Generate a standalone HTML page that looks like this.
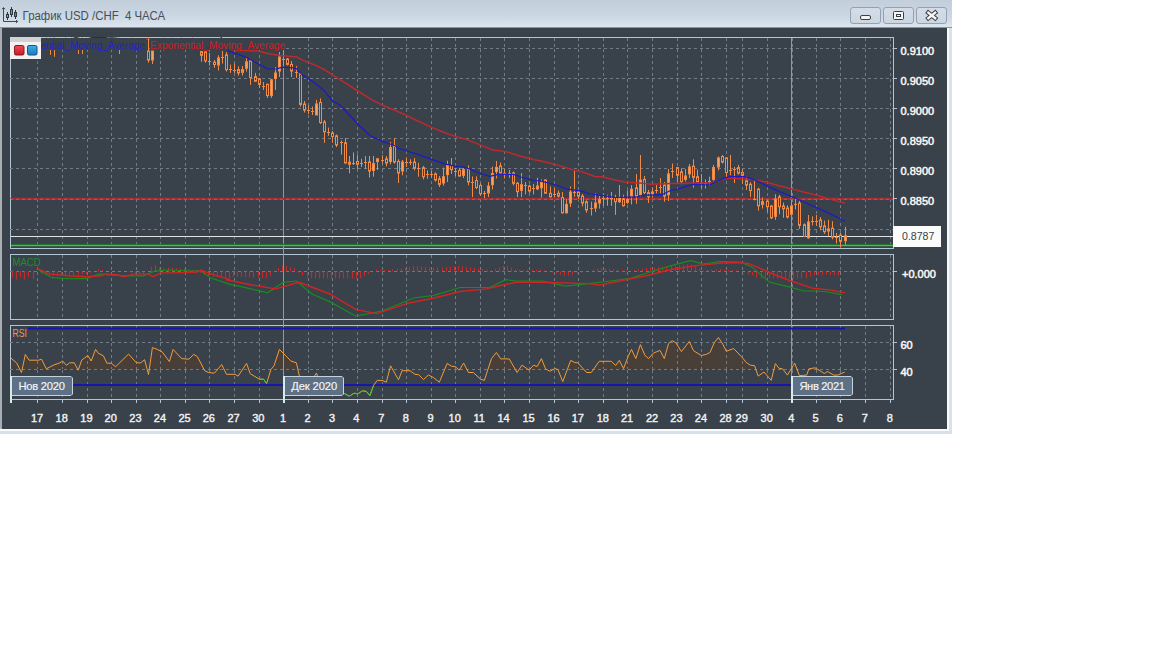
<!DOCTYPE html><html><head><meta charset="utf-8"><style>html,body{margin:0;padding:0;width:1152px;height:648px;background:#fff;overflow:hidden}svg{display:block}</style></head><body>
<svg width="1152" height="648" viewBox="0 0 1152 648" style="font-family:'Liberation Sans', sans-serif">
<defs><linearGradient id="tb" x1="0" y1="0" x2="0" y2="1"><stop offset="0" stop-color="#c2cfdb"/><stop offset="0.5" stop-color="#c9d5e1"/><stop offset="1" stop-color="#dde6ef"/></linearGradient><linearGradient id="btn" x1="0" y1="0" x2="0" y2="1"><stop offset="0" stop-color="#d4dde7"/><stop offset="1" stop-color="#cbd6e1"/></linearGradient><linearGradient id="rg" x1="0" y1="0" x2="0" y2="1"><stop offset="0" stop-color="#f04a55"/><stop offset="1" stop-color="#c01c28"/></linearGradient><linearGradient id="bg2" x1="0" y1="0" x2="0" y2="1"><stop offset="0" stop-color="#3cb0ea"/><stop offset="1" stop-color="#1c78bc"/></linearGradient><clipPath id="c1"><rect x="11" y="37" width="882" height="211"/></clipPath><clipPath id="c2"><rect x="11" y="255" width="882" height="64"/></clipPath><clipPath id="c3"><rect x="11" y="326" width="882" height="73"/></clipPath><clipPath id="c3f"><rect x="11" y="326" width="882" height="43.5"/></clipPath></defs>
<rect x="0" y="0" width="952" height="28" fill="url(#tb)"/>
<rect x="0" y="27" width="952" height="1" fill="#8d949b"/>
<rect x="0" y="28" width="952" height="406" fill="#d8e2ec"/>
<rect x="0" y="28" width="949" height="403" fill="#f8fafc"/>
<rect x="0" y="28" width="2" height="401" fill="#a9aeb3"/>
<rect x="2" y="28" width="945" height="401" fill="#39414b"/>
<g stroke="#3e4a56" stroke-width="1" fill="none"><path d="M3.5 8 V21.5 H17.5"/><path d="M2 9.2 L3.5 7.5 L5 9.2"/><path d="M16 20 L17.7 21.5 L16 23"/></g>
<g stroke="#2e3a40" stroke-width="1"><line x1="7.5" y1="12" x2="7.5" y2="20"/><rect x="6.5" y="14.5" width="2" height="3" fill="#80b880"/><line x1="11.5" y1="7" x2="11.5" y2="17"/><rect x="10.5" y="9.5" width="2" height="5" fill="#6aa86a"/><line x1="15.5" y1="10" x2="15.5" y2="19"/><rect x="14.5" y="12.5" width="2" height="4" fill="#9a6868"/></g>
<text x="22.6" y="19.8" font-size="12" fill="#44505c" textLength="142.5" lengthAdjust="spacingAndGlyphs" style="white-space:pre">График USD /CHF  4 ЧАСА</text>
<rect x="850.5" y="7.5" width="30" height="16" rx="2.5" fill="url(#btn)" stroke="#93a1b0"/>
<rect x="883.5" y="7.5" width="30" height="16" rx="2.5" fill="url(#btn)" stroke="#93a1b0"/>
<rect x="916.5" y="7.5" width="30" height="16" rx="2.5" fill="url(#btn)" stroke="#93a1b0"/>
<rect x="860.5" y="15.5" width="10" height="4" rx="1.5" fill="#f4f4f4" stroke="#3a3f46"/>
<rect x="893.5" y="11.5" width="10" height="8" rx="1" fill="#f4f4f4" stroke="#3a3f46"/><rect x="896.5" y="14.5" width="4" height="2" fill="none" stroke="#3a3f46"/>
<path d="M928.3 12.6 L935.2 18.2 M935.2 12.6 L928.3 18.2" stroke="#3a3f46" stroke-width="4.4" stroke-linecap="square"/><path d="M928.3 12.6 L935.2 18.2 M935.2 12.6 L928.3 18.2" stroke="#f6f6f6" stroke-width="2.4" stroke-linecap="square"/>
<rect x="10.5" y="37.5" width="883.0" height="211.0" fill="none" stroke="#b4c4d2"/>
<rect x="10.5" y="254.5" width="883.0" height="65.0" fill="none" stroke="#b4c4d2"/>
<rect x="10.5" y="325.5" width="883.0" height="74.0" fill="none" stroke="#b4c4d2"/>
<g clip-path="url(#c3f)"><polygon points="10.0,369.5 10.0,357.3 16.7,363.0 21.5,372.6 25.3,354.5 29.1,360.2 38.6,360.2 41.5,359.2 46.3,368.8 53.9,365.0 60.0,362.8 62.6,361.0 66.5,365.4 69.5,362.8 74.3,362.8 78.2,370.2 81.7,360.2 87.8,355.4 91.2,361.0 95.6,349.3 98.2,353.2 103.4,355.8 106.9,363.2 111.2,363.2 115.6,366.7 128.6,354.1 136.4,362.8 140.7,362.8 144.6,359.7 148.5,374.5 152.4,347.6 157.3,349.4 162.2,351.9 169.4,361.6 173.1,349.4 181.6,358.6 188.9,359.2 193.7,354.3 197.4,356.7 204.7,370.7 208.3,372.5 214.4,373.1 221.7,364.6 226.5,374.3 235.0,374.3 238.1,376.2 246.6,363.4 250.2,373.7 259.4,379.2 263.6,379.2 266.6,383.5 270.9,369.5 274.0,365.8 279.4,349.4 283.7,353.7 290.9,361.0 296.4,362.8 299.4,376.2 305.0,385.0 312.0,380.0 316.5,373.0 320.0,385.0 330.0,392.0 343.8,393.2 349.3,396.2 354.1,393.2 357.8,393.8 362.6,390.8 366.3,391.4 369.9,395.6 373.6,385.3 377.2,380.4 382.1,380.4 386.3,382.2 390.6,365.8 398.5,379.8 402.1,370.7 410.0,370.7 414.9,374.3 418.6,374.7 423.5,379.6 428.4,375.0 433.2,377.4 439.3,382.2 447.2,363.4 451.5,366.2 455.1,366.5 459.3,370.1 463.6,363.0 468.5,372.5 473.3,372.5 480.6,379.2 484.3,380.4 491.5,358.6 496.4,352.5 500.7,358.9 509.2,358.9 517.1,372.5 521.9,365.2 529.2,370.1 533.5,365.2 537.1,366.5 541.4,358.6 545.6,368.9 549.9,371.3 554.9,368.6 557.9,369.5 562.8,381.6 570.7,360.4 574.9,362.6 577.9,362.8 586.5,372.5 591.3,372.5 599.2,361.3 611.4,361.3 615.6,365.5 619.3,360.4 623.5,368.6 628.5,355.5 631.5,349.4 635.8,358.6 640.4,344.6 645.0,355.5 648.6,358.6 653.4,353.1 660.0,350.4 664.3,358.6 668.6,343.4 672.2,340.7 675.9,342.8 681.4,351.6 689.3,341.5 693.5,350.7 701.4,355.5 706.3,354.3 710.0,352.5 714.2,342.8 718.4,337.5 722.7,344.0 726.3,351.3 733.6,348.5 741.5,356.7 746.4,362.6 750.4,365.2 754.6,365.7 758.2,376.1 764.0,372.0 771.2,380.3 775.4,363.6 779.0,368.3 782.7,368.9 787.4,375.1 794.7,363.1 799.4,375.6 806.7,375.1 808.8,368.9 815.0,367.8 824.4,373.5 827.5,371.5 833.8,375.1 837.9,375.1 844.7,372.0 844.7,369.5" fill="#483f38"/></g>
<g stroke="#737c85" stroke-width="1" stroke-dasharray="3,3"><line x1="10" y1="48.5" x2="893" y2="48.5"/><line x1="10" y1="78.5" x2="893" y2="78.5"/><line x1="10" y1="108.5" x2="893" y2="108.5"/><line x1="10" y1="138.5" x2="893" y2="138.5"/><line x1="10" y1="168.5" x2="893" y2="168.5"/><line x1="10" y1="198.5" x2="893" y2="198.5"/><line x1="10" y1="229.5" x2="893" y2="229.5"/><line x1="37.5" y1="38" x2="37.5" y2="48"/><line x1="37.5" y1="49" x2="37.5" y2="78"/><line x1="37.5" y1="79" x2="37.5" y2="108"/><line x1="37.5" y1="109" x2="37.5" y2="138"/><line x1="37.5" y1="139" x2="37.5" y2="168"/><line x1="37.5" y1="169" x2="37.5" y2="198"/><line x1="37.5" y1="199" x2="37.5" y2="229"/><line x1="37.5" y1="230" x2="37.5" y2="248"/><line x1="37.5" y1="255" x2="37.5" y2="271"/><line x1="37.5" y1="272" x2="37.5" y2="319"/><line x1="37.5" y1="326" x2="37.5" y2="342"/><line x1="37.5" y1="343" x2="37.5" y2="369"/><line x1="37.5" y1="370" x2="37.5" y2="399"/><line x1="62.5" y1="38" x2="62.5" y2="48"/><line x1="62.5" y1="49" x2="62.5" y2="78"/><line x1="62.5" y1="79" x2="62.5" y2="108"/><line x1="62.5" y1="109" x2="62.5" y2="138"/><line x1="62.5" y1="139" x2="62.5" y2="168"/><line x1="62.5" y1="169" x2="62.5" y2="198"/><line x1="62.5" y1="199" x2="62.5" y2="229"/><line x1="62.5" y1="230" x2="62.5" y2="248"/><line x1="62.5" y1="255" x2="62.5" y2="271"/><line x1="62.5" y1="272" x2="62.5" y2="319"/><line x1="62.5" y1="326" x2="62.5" y2="342"/><line x1="62.5" y1="343" x2="62.5" y2="369"/><line x1="62.5" y1="370" x2="62.5" y2="399"/><line x1="87.5" y1="38" x2="87.5" y2="48"/><line x1="87.5" y1="49" x2="87.5" y2="78"/><line x1="87.5" y1="79" x2="87.5" y2="108"/><line x1="87.5" y1="109" x2="87.5" y2="138"/><line x1="87.5" y1="139" x2="87.5" y2="168"/><line x1="87.5" y1="169" x2="87.5" y2="198"/><line x1="87.5" y1="199" x2="87.5" y2="229"/><line x1="87.5" y1="230" x2="87.5" y2="248"/><line x1="87.5" y1="255" x2="87.5" y2="271"/><line x1="87.5" y1="272" x2="87.5" y2="319"/><line x1="87.5" y1="326" x2="87.5" y2="342"/><line x1="87.5" y1="343" x2="87.5" y2="369"/><line x1="87.5" y1="370" x2="87.5" y2="399"/><line x1="111.5" y1="38" x2="111.5" y2="48"/><line x1="111.5" y1="49" x2="111.5" y2="78"/><line x1="111.5" y1="79" x2="111.5" y2="108"/><line x1="111.5" y1="109" x2="111.5" y2="138"/><line x1="111.5" y1="139" x2="111.5" y2="168"/><line x1="111.5" y1="169" x2="111.5" y2="198"/><line x1="111.5" y1="199" x2="111.5" y2="229"/><line x1="111.5" y1="230" x2="111.5" y2="248"/><line x1="111.5" y1="255" x2="111.5" y2="271"/><line x1="111.5" y1="272" x2="111.5" y2="319"/><line x1="111.5" y1="326" x2="111.5" y2="342"/><line x1="111.5" y1="343" x2="111.5" y2="369"/><line x1="111.5" y1="370" x2="111.5" y2="399"/><line x1="136.5" y1="38" x2="136.5" y2="48"/><line x1="136.5" y1="49" x2="136.5" y2="78"/><line x1="136.5" y1="79" x2="136.5" y2="108"/><line x1="136.5" y1="109" x2="136.5" y2="138"/><line x1="136.5" y1="139" x2="136.5" y2="168"/><line x1="136.5" y1="169" x2="136.5" y2="198"/><line x1="136.5" y1="199" x2="136.5" y2="229"/><line x1="136.5" y1="230" x2="136.5" y2="248"/><line x1="136.5" y1="255" x2="136.5" y2="271"/><line x1="136.5" y1="272" x2="136.5" y2="319"/><line x1="136.5" y1="326" x2="136.5" y2="342"/><line x1="136.5" y1="343" x2="136.5" y2="369"/><line x1="136.5" y1="370" x2="136.5" y2="399"/><line x1="160.5" y1="38" x2="160.5" y2="48"/><line x1="160.5" y1="49" x2="160.5" y2="78"/><line x1="160.5" y1="79" x2="160.5" y2="108"/><line x1="160.5" y1="109" x2="160.5" y2="138"/><line x1="160.5" y1="139" x2="160.5" y2="168"/><line x1="160.5" y1="169" x2="160.5" y2="198"/><line x1="160.5" y1="199" x2="160.5" y2="229"/><line x1="160.5" y1="230" x2="160.5" y2="248"/><line x1="160.5" y1="255" x2="160.5" y2="271"/><line x1="160.5" y1="272" x2="160.5" y2="319"/><line x1="160.5" y1="326" x2="160.5" y2="342"/><line x1="160.5" y1="343" x2="160.5" y2="369"/><line x1="160.5" y1="370" x2="160.5" y2="399"/><line x1="185.5" y1="38" x2="185.5" y2="48"/><line x1="185.5" y1="49" x2="185.5" y2="78"/><line x1="185.5" y1="79" x2="185.5" y2="108"/><line x1="185.5" y1="109" x2="185.5" y2="138"/><line x1="185.5" y1="139" x2="185.5" y2="168"/><line x1="185.5" y1="169" x2="185.5" y2="198"/><line x1="185.5" y1="199" x2="185.5" y2="229"/><line x1="185.5" y1="230" x2="185.5" y2="248"/><line x1="185.5" y1="255" x2="185.5" y2="271"/><line x1="185.5" y1="272" x2="185.5" y2="319"/><line x1="185.5" y1="326" x2="185.5" y2="342"/><line x1="185.5" y1="343" x2="185.5" y2="369"/><line x1="185.5" y1="370" x2="185.5" y2="399"/><line x1="209.5" y1="38" x2="209.5" y2="48"/><line x1="209.5" y1="49" x2="209.5" y2="78"/><line x1="209.5" y1="79" x2="209.5" y2="108"/><line x1="209.5" y1="109" x2="209.5" y2="138"/><line x1="209.5" y1="139" x2="209.5" y2="168"/><line x1="209.5" y1="169" x2="209.5" y2="198"/><line x1="209.5" y1="199" x2="209.5" y2="229"/><line x1="209.5" y1="230" x2="209.5" y2="248"/><line x1="209.5" y1="255" x2="209.5" y2="271"/><line x1="209.5" y1="272" x2="209.5" y2="319"/><line x1="209.5" y1="326" x2="209.5" y2="342"/><line x1="209.5" y1="343" x2="209.5" y2="369"/><line x1="209.5" y1="370" x2="209.5" y2="399"/><line x1="234.5" y1="38" x2="234.5" y2="48"/><line x1="234.5" y1="49" x2="234.5" y2="78"/><line x1="234.5" y1="79" x2="234.5" y2="108"/><line x1="234.5" y1="109" x2="234.5" y2="138"/><line x1="234.5" y1="139" x2="234.5" y2="168"/><line x1="234.5" y1="169" x2="234.5" y2="198"/><line x1="234.5" y1="199" x2="234.5" y2="229"/><line x1="234.5" y1="230" x2="234.5" y2="248"/><line x1="234.5" y1="255" x2="234.5" y2="271"/><line x1="234.5" y1="272" x2="234.5" y2="319"/><line x1="234.5" y1="326" x2="234.5" y2="342"/><line x1="234.5" y1="343" x2="234.5" y2="369"/><line x1="234.5" y1="370" x2="234.5" y2="399"/><line x1="259.5" y1="38" x2="259.5" y2="48"/><line x1="259.5" y1="49" x2="259.5" y2="78"/><line x1="259.5" y1="79" x2="259.5" y2="108"/><line x1="259.5" y1="109" x2="259.5" y2="138"/><line x1="259.5" y1="139" x2="259.5" y2="168"/><line x1="259.5" y1="169" x2="259.5" y2="198"/><line x1="259.5" y1="199" x2="259.5" y2="229"/><line x1="259.5" y1="230" x2="259.5" y2="248"/><line x1="259.5" y1="255" x2="259.5" y2="271"/><line x1="259.5" y1="272" x2="259.5" y2="319"/><line x1="259.5" y1="326" x2="259.5" y2="342"/><line x1="259.5" y1="343" x2="259.5" y2="369"/><line x1="259.5" y1="370" x2="259.5" y2="399"/><line x1="283.5" y1="38" x2="283.5" y2="48"/><line x1="283.5" y1="49" x2="283.5" y2="78"/><line x1="283.5" y1="79" x2="283.5" y2="108"/><line x1="283.5" y1="109" x2="283.5" y2="138"/><line x1="283.5" y1="139" x2="283.5" y2="168"/><line x1="283.5" y1="169" x2="283.5" y2="198"/><line x1="283.5" y1="199" x2="283.5" y2="229"/><line x1="283.5" y1="230" x2="283.5" y2="248"/><line x1="283.5" y1="255" x2="283.5" y2="271"/><line x1="283.5" y1="272" x2="283.5" y2="319"/><line x1="283.5" y1="326" x2="283.5" y2="342"/><line x1="283.5" y1="343" x2="283.5" y2="369"/><line x1="283.5" y1="370" x2="283.5" y2="399"/><line x1="308.5" y1="38" x2="308.5" y2="48"/><line x1="308.5" y1="49" x2="308.5" y2="78"/><line x1="308.5" y1="79" x2="308.5" y2="108"/><line x1="308.5" y1="109" x2="308.5" y2="138"/><line x1="308.5" y1="139" x2="308.5" y2="168"/><line x1="308.5" y1="169" x2="308.5" y2="198"/><line x1="308.5" y1="199" x2="308.5" y2="229"/><line x1="308.5" y1="230" x2="308.5" y2="248"/><line x1="308.5" y1="255" x2="308.5" y2="271"/><line x1="308.5" y1="272" x2="308.5" y2="319"/><line x1="308.5" y1="326" x2="308.5" y2="342"/><line x1="308.5" y1="343" x2="308.5" y2="369"/><line x1="308.5" y1="370" x2="308.5" y2="399"/><line x1="332.5" y1="38" x2="332.5" y2="48"/><line x1="332.5" y1="49" x2="332.5" y2="78"/><line x1="332.5" y1="79" x2="332.5" y2="108"/><line x1="332.5" y1="109" x2="332.5" y2="138"/><line x1="332.5" y1="139" x2="332.5" y2="168"/><line x1="332.5" y1="169" x2="332.5" y2="198"/><line x1="332.5" y1="199" x2="332.5" y2="229"/><line x1="332.5" y1="230" x2="332.5" y2="248"/><line x1="332.5" y1="255" x2="332.5" y2="271"/><line x1="332.5" y1="272" x2="332.5" y2="319"/><line x1="332.5" y1="326" x2="332.5" y2="342"/><line x1="332.5" y1="343" x2="332.5" y2="369"/><line x1="332.5" y1="370" x2="332.5" y2="399"/><line x1="357.5" y1="38" x2="357.5" y2="48"/><line x1="357.5" y1="49" x2="357.5" y2="78"/><line x1="357.5" y1="79" x2="357.5" y2="108"/><line x1="357.5" y1="109" x2="357.5" y2="138"/><line x1="357.5" y1="139" x2="357.5" y2="168"/><line x1="357.5" y1="169" x2="357.5" y2="198"/><line x1="357.5" y1="199" x2="357.5" y2="229"/><line x1="357.5" y1="230" x2="357.5" y2="248"/><line x1="357.5" y1="255" x2="357.5" y2="271"/><line x1="357.5" y1="272" x2="357.5" y2="319"/><line x1="357.5" y1="326" x2="357.5" y2="342"/><line x1="357.5" y1="343" x2="357.5" y2="369"/><line x1="357.5" y1="370" x2="357.5" y2="399"/><line x1="382.5" y1="38" x2="382.5" y2="48"/><line x1="382.5" y1="49" x2="382.5" y2="78"/><line x1="382.5" y1="79" x2="382.5" y2="108"/><line x1="382.5" y1="109" x2="382.5" y2="138"/><line x1="382.5" y1="139" x2="382.5" y2="168"/><line x1="382.5" y1="169" x2="382.5" y2="198"/><line x1="382.5" y1="199" x2="382.5" y2="229"/><line x1="382.5" y1="230" x2="382.5" y2="248"/><line x1="382.5" y1="255" x2="382.5" y2="271"/><line x1="382.5" y1="272" x2="382.5" y2="319"/><line x1="382.5" y1="326" x2="382.5" y2="342"/><line x1="382.5" y1="343" x2="382.5" y2="369"/><line x1="382.5" y1="370" x2="382.5" y2="399"/><line x1="406.5" y1="38" x2="406.5" y2="48"/><line x1="406.5" y1="49" x2="406.5" y2="78"/><line x1="406.5" y1="79" x2="406.5" y2="108"/><line x1="406.5" y1="109" x2="406.5" y2="138"/><line x1="406.5" y1="139" x2="406.5" y2="168"/><line x1="406.5" y1="169" x2="406.5" y2="198"/><line x1="406.5" y1="199" x2="406.5" y2="229"/><line x1="406.5" y1="230" x2="406.5" y2="248"/><line x1="406.5" y1="255" x2="406.5" y2="271"/><line x1="406.5" y1="272" x2="406.5" y2="319"/><line x1="406.5" y1="326" x2="406.5" y2="342"/><line x1="406.5" y1="343" x2="406.5" y2="369"/><line x1="406.5" y1="370" x2="406.5" y2="399"/><line x1="431.5" y1="38" x2="431.5" y2="48"/><line x1="431.5" y1="49" x2="431.5" y2="78"/><line x1="431.5" y1="79" x2="431.5" y2="108"/><line x1="431.5" y1="109" x2="431.5" y2="138"/><line x1="431.5" y1="139" x2="431.5" y2="168"/><line x1="431.5" y1="169" x2="431.5" y2="198"/><line x1="431.5" y1="199" x2="431.5" y2="229"/><line x1="431.5" y1="230" x2="431.5" y2="248"/><line x1="431.5" y1="255" x2="431.5" y2="271"/><line x1="431.5" y1="272" x2="431.5" y2="319"/><line x1="431.5" y1="326" x2="431.5" y2="342"/><line x1="431.5" y1="343" x2="431.5" y2="369"/><line x1="431.5" y1="370" x2="431.5" y2="399"/><line x1="455.5" y1="38" x2="455.5" y2="48"/><line x1="455.5" y1="49" x2="455.5" y2="78"/><line x1="455.5" y1="79" x2="455.5" y2="108"/><line x1="455.5" y1="109" x2="455.5" y2="138"/><line x1="455.5" y1="139" x2="455.5" y2="168"/><line x1="455.5" y1="169" x2="455.5" y2="198"/><line x1="455.5" y1="199" x2="455.5" y2="229"/><line x1="455.5" y1="230" x2="455.5" y2="248"/><line x1="455.5" y1="255" x2="455.5" y2="271"/><line x1="455.5" y1="272" x2="455.5" y2="319"/><line x1="455.5" y1="326" x2="455.5" y2="342"/><line x1="455.5" y1="343" x2="455.5" y2="369"/><line x1="455.5" y1="370" x2="455.5" y2="399"/><line x1="480.5" y1="38" x2="480.5" y2="48"/><line x1="480.5" y1="49" x2="480.5" y2="78"/><line x1="480.5" y1="79" x2="480.5" y2="108"/><line x1="480.5" y1="109" x2="480.5" y2="138"/><line x1="480.5" y1="139" x2="480.5" y2="168"/><line x1="480.5" y1="169" x2="480.5" y2="198"/><line x1="480.5" y1="199" x2="480.5" y2="229"/><line x1="480.5" y1="230" x2="480.5" y2="248"/><line x1="480.5" y1="255" x2="480.5" y2="271"/><line x1="480.5" y1="272" x2="480.5" y2="319"/><line x1="480.5" y1="326" x2="480.5" y2="342"/><line x1="480.5" y1="343" x2="480.5" y2="369"/><line x1="480.5" y1="370" x2="480.5" y2="399"/><line x1="504.5" y1="38" x2="504.5" y2="48"/><line x1="504.5" y1="49" x2="504.5" y2="78"/><line x1="504.5" y1="79" x2="504.5" y2="108"/><line x1="504.5" y1="109" x2="504.5" y2="138"/><line x1="504.5" y1="139" x2="504.5" y2="168"/><line x1="504.5" y1="169" x2="504.5" y2="198"/><line x1="504.5" y1="199" x2="504.5" y2="229"/><line x1="504.5" y1="230" x2="504.5" y2="248"/><line x1="504.5" y1="255" x2="504.5" y2="271"/><line x1="504.5" y1="272" x2="504.5" y2="319"/><line x1="504.5" y1="326" x2="504.5" y2="342"/><line x1="504.5" y1="343" x2="504.5" y2="369"/><line x1="504.5" y1="370" x2="504.5" y2="399"/><line x1="529.5" y1="38" x2="529.5" y2="48"/><line x1="529.5" y1="49" x2="529.5" y2="78"/><line x1="529.5" y1="79" x2="529.5" y2="108"/><line x1="529.5" y1="109" x2="529.5" y2="138"/><line x1="529.5" y1="139" x2="529.5" y2="168"/><line x1="529.5" y1="169" x2="529.5" y2="198"/><line x1="529.5" y1="199" x2="529.5" y2="229"/><line x1="529.5" y1="230" x2="529.5" y2="248"/><line x1="529.5" y1="255" x2="529.5" y2="271"/><line x1="529.5" y1="272" x2="529.5" y2="319"/><line x1="529.5" y1="326" x2="529.5" y2="342"/><line x1="529.5" y1="343" x2="529.5" y2="369"/><line x1="529.5" y1="370" x2="529.5" y2="399"/><line x1="554.5" y1="38" x2="554.5" y2="48"/><line x1="554.5" y1="49" x2="554.5" y2="78"/><line x1="554.5" y1="79" x2="554.5" y2="108"/><line x1="554.5" y1="109" x2="554.5" y2="138"/><line x1="554.5" y1="139" x2="554.5" y2="168"/><line x1="554.5" y1="169" x2="554.5" y2="198"/><line x1="554.5" y1="199" x2="554.5" y2="229"/><line x1="554.5" y1="230" x2="554.5" y2="248"/><line x1="554.5" y1="255" x2="554.5" y2="271"/><line x1="554.5" y1="272" x2="554.5" y2="319"/><line x1="554.5" y1="326" x2="554.5" y2="342"/><line x1="554.5" y1="343" x2="554.5" y2="369"/><line x1="554.5" y1="370" x2="554.5" y2="399"/><line x1="578.5" y1="38" x2="578.5" y2="48"/><line x1="578.5" y1="49" x2="578.5" y2="78"/><line x1="578.5" y1="79" x2="578.5" y2="108"/><line x1="578.5" y1="109" x2="578.5" y2="138"/><line x1="578.5" y1="139" x2="578.5" y2="168"/><line x1="578.5" y1="169" x2="578.5" y2="198"/><line x1="578.5" y1="199" x2="578.5" y2="229"/><line x1="578.5" y1="230" x2="578.5" y2="248"/><line x1="578.5" y1="255" x2="578.5" y2="271"/><line x1="578.5" y1="272" x2="578.5" y2="319"/><line x1="578.5" y1="326" x2="578.5" y2="342"/><line x1="578.5" y1="343" x2="578.5" y2="369"/><line x1="578.5" y1="370" x2="578.5" y2="399"/><line x1="603.5" y1="38" x2="603.5" y2="48"/><line x1="603.5" y1="49" x2="603.5" y2="78"/><line x1="603.5" y1="79" x2="603.5" y2="108"/><line x1="603.5" y1="109" x2="603.5" y2="138"/><line x1="603.5" y1="139" x2="603.5" y2="168"/><line x1="603.5" y1="169" x2="603.5" y2="198"/><line x1="603.5" y1="199" x2="603.5" y2="229"/><line x1="603.5" y1="230" x2="603.5" y2="248"/><line x1="603.5" y1="255" x2="603.5" y2="271"/><line x1="603.5" y1="272" x2="603.5" y2="319"/><line x1="603.5" y1="326" x2="603.5" y2="342"/><line x1="603.5" y1="343" x2="603.5" y2="369"/><line x1="603.5" y1="370" x2="603.5" y2="399"/><line x1="627.5" y1="38" x2="627.5" y2="48"/><line x1="627.5" y1="49" x2="627.5" y2="78"/><line x1="627.5" y1="79" x2="627.5" y2="108"/><line x1="627.5" y1="109" x2="627.5" y2="138"/><line x1="627.5" y1="139" x2="627.5" y2="168"/><line x1="627.5" y1="169" x2="627.5" y2="198"/><line x1="627.5" y1="199" x2="627.5" y2="229"/><line x1="627.5" y1="230" x2="627.5" y2="248"/><line x1="627.5" y1="255" x2="627.5" y2="271"/><line x1="627.5" y1="272" x2="627.5" y2="319"/><line x1="627.5" y1="326" x2="627.5" y2="342"/><line x1="627.5" y1="343" x2="627.5" y2="369"/><line x1="627.5" y1="370" x2="627.5" y2="399"/><line x1="652.5" y1="38" x2="652.5" y2="48"/><line x1="652.5" y1="49" x2="652.5" y2="78"/><line x1="652.5" y1="79" x2="652.5" y2="108"/><line x1="652.5" y1="109" x2="652.5" y2="138"/><line x1="652.5" y1="139" x2="652.5" y2="168"/><line x1="652.5" y1="169" x2="652.5" y2="198"/><line x1="652.5" y1="199" x2="652.5" y2="229"/><line x1="652.5" y1="230" x2="652.5" y2="248"/><line x1="652.5" y1="255" x2="652.5" y2="271"/><line x1="652.5" y1="272" x2="652.5" y2="319"/><line x1="652.5" y1="326" x2="652.5" y2="342"/><line x1="652.5" y1="343" x2="652.5" y2="369"/><line x1="652.5" y1="370" x2="652.5" y2="399"/><line x1="677.5" y1="38" x2="677.5" y2="48"/><line x1="677.5" y1="49" x2="677.5" y2="78"/><line x1="677.5" y1="79" x2="677.5" y2="108"/><line x1="677.5" y1="109" x2="677.5" y2="138"/><line x1="677.5" y1="139" x2="677.5" y2="168"/><line x1="677.5" y1="169" x2="677.5" y2="198"/><line x1="677.5" y1="199" x2="677.5" y2="229"/><line x1="677.5" y1="230" x2="677.5" y2="248"/><line x1="677.5" y1="255" x2="677.5" y2="271"/><line x1="677.5" y1="272" x2="677.5" y2="319"/><line x1="677.5" y1="326" x2="677.5" y2="342"/><line x1="677.5" y1="343" x2="677.5" y2="369"/><line x1="677.5" y1="370" x2="677.5" y2="399"/><line x1="701.5" y1="38" x2="701.5" y2="48"/><line x1="701.5" y1="49" x2="701.5" y2="78"/><line x1="701.5" y1="79" x2="701.5" y2="108"/><line x1="701.5" y1="109" x2="701.5" y2="138"/><line x1="701.5" y1="139" x2="701.5" y2="168"/><line x1="701.5" y1="169" x2="701.5" y2="198"/><line x1="701.5" y1="199" x2="701.5" y2="229"/><line x1="701.5" y1="230" x2="701.5" y2="248"/><line x1="701.5" y1="255" x2="701.5" y2="271"/><line x1="701.5" y1="272" x2="701.5" y2="319"/><line x1="701.5" y1="326" x2="701.5" y2="342"/><line x1="701.5" y1="343" x2="701.5" y2="369"/><line x1="701.5" y1="370" x2="701.5" y2="399"/><line x1="726.5" y1="38" x2="726.5" y2="48"/><line x1="726.5" y1="49" x2="726.5" y2="78"/><line x1="726.5" y1="79" x2="726.5" y2="108"/><line x1="726.5" y1="109" x2="726.5" y2="138"/><line x1="726.5" y1="139" x2="726.5" y2="168"/><line x1="726.5" y1="169" x2="726.5" y2="198"/><line x1="726.5" y1="199" x2="726.5" y2="229"/><line x1="726.5" y1="230" x2="726.5" y2="248"/><line x1="726.5" y1="255" x2="726.5" y2="271"/><line x1="726.5" y1="272" x2="726.5" y2="319"/><line x1="726.5" y1="326" x2="726.5" y2="342"/><line x1="726.5" y1="343" x2="726.5" y2="369"/><line x1="726.5" y1="370" x2="726.5" y2="399"/><line x1="742.5" y1="38" x2="742.5" y2="48"/><line x1="742.5" y1="49" x2="742.5" y2="78"/><line x1="742.5" y1="79" x2="742.5" y2="108"/><line x1="742.5" y1="109" x2="742.5" y2="138"/><line x1="742.5" y1="139" x2="742.5" y2="168"/><line x1="742.5" y1="169" x2="742.5" y2="198"/><line x1="742.5" y1="199" x2="742.5" y2="229"/><line x1="742.5" y1="230" x2="742.5" y2="248"/><line x1="742.5" y1="255" x2="742.5" y2="271"/><line x1="742.5" y1="272" x2="742.5" y2="319"/><line x1="742.5" y1="326" x2="742.5" y2="342"/><line x1="742.5" y1="343" x2="742.5" y2="369"/><line x1="742.5" y1="370" x2="742.5" y2="399"/><line x1="767.5" y1="38" x2="767.5" y2="48"/><line x1="767.5" y1="49" x2="767.5" y2="78"/><line x1="767.5" y1="79" x2="767.5" y2="108"/><line x1="767.5" y1="109" x2="767.5" y2="138"/><line x1="767.5" y1="139" x2="767.5" y2="168"/><line x1="767.5" y1="169" x2="767.5" y2="198"/><line x1="767.5" y1="199" x2="767.5" y2="229"/><line x1="767.5" y1="230" x2="767.5" y2="248"/><line x1="767.5" y1="255" x2="767.5" y2="271"/><line x1="767.5" y1="272" x2="767.5" y2="319"/><line x1="767.5" y1="326" x2="767.5" y2="342"/><line x1="767.5" y1="343" x2="767.5" y2="369"/><line x1="767.5" y1="370" x2="767.5" y2="399"/><line x1="792.5" y1="38" x2="792.5" y2="48"/><line x1="792.5" y1="49" x2="792.5" y2="78"/><line x1="792.5" y1="79" x2="792.5" y2="108"/><line x1="792.5" y1="109" x2="792.5" y2="138"/><line x1="792.5" y1="139" x2="792.5" y2="168"/><line x1="792.5" y1="169" x2="792.5" y2="198"/><line x1="792.5" y1="199" x2="792.5" y2="229"/><line x1="792.5" y1="230" x2="792.5" y2="248"/><line x1="792.5" y1="255" x2="792.5" y2="271"/><line x1="792.5" y1="272" x2="792.5" y2="319"/><line x1="792.5" y1="326" x2="792.5" y2="342"/><line x1="792.5" y1="343" x2="792.5" y2="369"/><line x1="792.5" y1="370" x2="792.5" y2="399"/><line x1="816.5" y1="38" x2="816.5" y2="48"/><line x1="816.5" y1="49" x2="816.5" y2="78"/><line x1="816.5" y1="79" x2="816.5" y2="108"/><line x1="816.5" y1="109" x2="816.5" y2="138"/><line x1="816.5" y1="139" x2="816.5" y2="168"/><line x1="816.5" y1="169" x2="816.5" y2="198"/><line x1="816.5" y1="199" x2="816.5" y2="229"/><line x1="816.5" y1="230" x2="816.5" y2="248"/><line x1="816.5" y1="255" x2="816.5" y2="271"/><line x1="816.5" y1="272" x2="816.5" y2="319"/><line x1="816.5" y1="326" x2="816.5" y2="342"/><line x1="816.5" y1="343" x2="816.5" y2="369"/><line x1="816.5" y1="370" x2="816.5" y2="399"/><line x1="840.5" y1="38" x2="840.5" y2="48"/><line x1="840.5" y1="49" x2="840.5" y2="78"/><line x1="840.5" y1="79" x2="840.5" y2="108"/><line x1="840.5" y1="109" x2="840.5" y2="138"/><line x1="840.5" y1="139" x2="840.5" y2="168"/><line x1="840.5" y1="169" x2="840.5" y2="198"/><line x1="840.5" y1="199" x2="840.5" y2="229"/><line x1="840.5" y1="230" x2="840.5" y2="248"/><line x1="840.5" y1="255" x2="840.5" y2="271"/><line x1="840.5" y1="272" x2="840.5" y2="319"/><line x1="840.5" y1="326" x2="840.5" y2="342"/><line x1="840.5" y1="343" x2="840.5" y2="369"/><line x1="840.5" y1="370" x2="840.5" y2="399"/><line x1="865.5" y1="38" x2="865.5" y2="48"/><line x1="865.5" y1="49" x2="865.5" y2="78"/><line x1="865.5" y1="79" x2="865.5" y2="108"/><line x1="865.5" y1="109" x2="865.5" y2="138"/><line x1="865.5" y1="139" x2="865.5" y2="168"/><line x1="865.5" y1="169" x2="865.5" y2="198"/><line x1="865.5" y1="199" x2="865.5" y2="229"/><line x1="865.5" y1="230" x2="865.5" y2="248"/><line x1="865.5" y1="255" x2="865.5" y2="271"/><line x1="865.5" y1="272" x2="865.5" y2="319"/><line x1="865.5" y1="326" x2="865.5" y2="342"/><line x1="865.5" y1="343" x2="865.5" y2="369"/><line x1="865.5" y1="370" x2="865.5" y2="399"/><line x1="890.5" y1="38" x2="890.5" y2="48"/><line x1="890.5" y1="49" x2="890.5" y2="78"/><line x1="890.5" y1="79" x2="890.5" y2="108"/><line x1="890.5" y1="109" x2="890.5" y2="138"/><line x1="890.5" y1="139" x2="890.5" y2="168"/><line x1="890.5" y1="169" x2="890.5" y2="198"/><line x1="890.5" y1="199" x2="890.5" y2="229"/><line x1="890.5" y1="230" x2="890.5" y2="248"/><line x1="890.5" y1="255" x2="890.5" y2="271"/><line x1="890.5" y1="272" x2="890.5" y2="319"/><line x1="890.5" y1="326" x2="890.5" y2="342"/><line x1="890.5" y1="343" x2="890.5" y2="369"/><line x1="890.5" y1="370" x2="890.5" y2="399"/><line x1="10" y1="271.5" x2="893" y2="271.5"/><line x1="10" y1="342.5" x2="893" y2="342.5"/><line x1="10" y1="369.5" x2="893" y2="369.5"/></g>
<line x1="283.5" y1="38" x2="283.5" y2="399" stroke="#8e9aa6" stroke-width="1"/>
<line x1="791.5" y1="38" x2="791.5" y2="399" stroke="#8e9aa6" stroke-width="1"/>
<g clip-path="url(#c1)"><rect x="11" y="197.8" width="882" height="2.2" fill="#a82c36"/><line x1="10" y1="199.3" x2="893" y2="199.3" stroke="#c85a62" stroke-width="0.9" stroke-dasharray="3,3"/><line x1="11" y1="236.5" x2="893" y2="236.5" stroke="#dfe3e6" stroke-width="1.2"/><rect x="11" y="243.8" width="882" height="1" fill="#106a16"/><rect x="11" y="244.8" width="882" height="1.4" fill="#44c044"/><line x1="46.5" y1="30.0" x2="46.5" y2="38.0" stroke="#f08a46"/><line x1="45" y1="34.5" x2="48" y2="34.5" stroke="#f08a46"/><line x1="53.5" y1="30.0" x2="53.5" y2="38.0" stroke="#f08a46"/><line x1="52" y1="34.5" x2="55" y2="34.5" stroke="#f08a46"/><line x1="65.5" y1="30.0" x2="65.5" y2="38.0" stroke="#f08a46"/><line x1="64" y1="34.5" x2="67" y2="34.5" stroke="#f08a46"/><line x1="71.5" y1="30.0" x2="71.5" y2="38.0" stroke="#f08a46"/><line x1="70" y1="34.5" x2="73" y2="34.5" stroke="#f08a46"/><line x1="86.5" y1="30.0" x2="86.5" y2="38.0" stroke="#f08a46"/><line x1="85" y1="34.5" x2="88" y2="34.5" stroke="#f08a46"/><line x1="89.5" y1="30.0" x2="89.5" y2="38.0" stroke="#f08a46"/><line x1="88" y1="34.5" x2="91" y2="34.5" stroke="#f08a46"/><line x1="108.5" y1="30.0" x2="108.5" y2="38.0" stroke="#f08a46"/><line x1="107" y1="34.5" x2="110" y2="34.5" stroke="#f08a46"/><line x1="132.5" y1="30.0" x2="132.5" y2="38.0" stroke="#f08a46"/><line x1="131" y1="34.5" x2="134" y2="34.5" stroke="#f08a46"/><line x1="163.5" y1="30.0" x2="163.5" y2="38.0" stroke="#f08a46"/><line x1="162" y1="34.5" x2="165" y2="34.5" stroke="#f08a46"/><line x1="171.5" y1="30.0" x2="171.5" y2="38.0" stroke="#f08a46"/><line x1="170" y1="34.5" x2="173" y2="34.5" stroke="#f08a46"/><line x1="181.5" y1="30.0" x2="181.5" y2="38.0" stroke="#f08a46"/><line x1="180" y1="34.5" x2="183" y2="34.5" stroke="#f08a46"/><line x1="192.5" y1="30.0" x2="192.5" y2="38.0" stroke="#f08a46"/><line x1="191" y1="34.5" x2="194" y2="34.5" stroke="#f08a46"/><line x1="50.5" y1="30.0" x2="50.5" y2="54.8" stroke="#f08a46"/><rect x="49.5" y="33.0" width="2" height="3.0" fill="#39414b" stroke="#f08a46"/><line x1="54.5" y1="30.0" x2="54.5" y2="56.8" stroke="#f08a46"/><rect x="53.5" y="33.0" width="2" height="3.0" fill="#39414b" stroke="#f08a46"/><line x1="78.5" y1="30.0" x2="78.5" y2="54.0" stroke="#f08a46"/><rect x="77.5" y="33.0" width="2" height="3.0" fill="#39414b" stroke="#f08a46"/><line x1="82.5" y1="30.0" x2="82.5" y2="54.0" stroke="#f08a46"/><rect x="81.5" y="33.0" width="2" height="3.0" fill="#39414b" stroke="#f08a46"/><line x1="119.5" y1="30.0" x2="119.5" y2="54.0" stroke="#f08a46"/><rect x="118.5" y="33.0" width="2" height="3.0" fill="#39414b" stroke="#f08a46"/><line x1="148.5" y1="37.0" x2="148.5" y2="62.7" stroke="#f08a46"/><rect x="147.5" y="51.0" width="2" height="9.0" fill="#39414b" stroke="#f08a46"/><line x1="152.5" y1="51.0" x2="152.5" y2="64.0" stroke="#f08a46"/><rect x="151.5" y="51.0" width="2" height="9.0" fill="#f6a465" stroke="#f08a46"/><line x1="201.5" y1="51.1" x2="201.5" y2="61.8" stroke="#f08a46"/><rect x="200.5" y="51.6" width="2" height="3.7" fill="#39414b" stroke="#f08a46"/><line x1="205.5" y1="51.6" x2="205.5" y2="62.7" stroke="#f08a46"/><rect x="204.5" y="52.0" width="2" height="8.8" fill="#39414b" stroke="#f08a46"/><line x1="209.5" y1="53.0" x2="209.5" y2="65.5" stroke="#f08a46"/><line x1="208" y1="61.5" x2="211" y2="61.5" stroke="#f08a46"/><line x1="214.5" y1="60.0" x2="214.5" y2="67.8" stroke="#f08a46"/><rect x="213.5" y="62.2" width="2" height="2.3" fill="#39414b" stroke="#f08a46"/><line x1="218.5" y1="55.3" x2="218.5" y2="70.5" stroke="#f08a46"/><rect x="217.5" y="58.0" width="2" height="7.0" fill="#f6a465" stroke="#f08a46"/><line x1="222.5" y1="51.0" x2="222.5" y2="63.6" stroke="#f08a46"/><line x1="221" y1="57.5" x2="224" y2="57.5" stroke="#f08a46"/><line x1="226.5" y1="52.0" x2="226.5" y2="71.5" stroke="#f08a46"/><rect x="225.5" y="54.8" width="2" height="14.8" fill="#39414b" stroke="#f08a46"/><line x1="230.5" y1="64.5" x2="230.5" y2="72.9" stroke="#f08a46"/><line x1="229" y1="69.5" x2="232" y2="69.5" stroke="#f08a46"/><line x1="234.5" y1="63.6" x2="234.5" y2="72.9" stroke="#f08a46"/><line x1="233" y1="70.5" x2="236" y2="70.5" stroke="#f08a46"/><line x1="238.5" y1="66.4" x2="238.5" y2="75.6" stroke="#f08a46"/><rect x="237.5" y="69.6" width="2" height="3.3" fill="#39414b" stroke="#f08a46"/><line x1="242.5" y1="66.0" x2="242.5" y2="75.6" stroke="#f08a46"/><rect x="241.5" y="69.6" width="2" height="2.8" fill="#39414b" stroke="#f08a46"/><line x1="246.5" y1="58.0" x2="246.5" y2="71.5" stroke="#f08a46"/><rect x="245.5" y="61.8" width="2" height="6.4" fill="#f6a465" stroke="#f08a46"/><line x1="250.5" y1="59.4" x2="250.5" y2="84.9" stroke="#f08a46"/><rect x="249.5" y="60.8" width="2" height="16.7" fill="#39414b" stroke="#f08a46"/><line x1="255.5" y1="72.9" x2="255.5" y2="81.7" stroke="#f08a46"/><rect x="254.5" y="76.6" width="2" height="4.6" fill="#39414b" stroke="#f08a46"/><line x1="259.5" y1="78.0" x2="259.5" y2="88.1" stroke="#f08a46"/><rect x="258.5" y="78.9" width="2" height="5.5" fill="#39414b" stroke="#f08a46"/><line x1="263.5" y1="82.0" x2="263.5" y2="90.0" stroke="#f08a46"/><line x1="262" y1="86.5" x2="265" y2="86.5" stroke="#f08a46"/><line x1="267.5" y1="83.5" x2="267.5" y2="97.9" stroke="#f08a46"/><rect x="266.5" y="84.4" width="2" height="11.2" fill="#39414b" stroke="#f08a46"/><line x1="271.5" y1="78.9" x2="271.5" y2="97.9" stroke="#f08a46"/><rect x="270.5" y="79.8" width="2" height="15.8" fill="#f6a465" stroke="#f08a46"/><line x1="275.5" y1="67.0" x2="275.5" y2="90.0" stroke="#f08a46"/><rect x="274.5" y="73.0" width="2" height="5.5" fill="#f6a465" stroke="#f08a46"/><line x1="279.5" y1="52.0" x2="279.5" y2="77.0" stroke="#f08a46"/><rect x="278.5" y="57.0" width="2" height="14.0" fill="#f6a465" stroke="#f08a46"/><line x1="283.5" y1="51.0" x2="283.5" y2="65.5" stroke="#f08a46"/><line x1="282" y1="59.5" x2="285" y2="59.5" stroke="#f08a46"/><line x1="287.5" y1="58.0" x2="287.5" y2="65.5" stroke="#f08a46"/><rect x="286.5" y="59.0" width="2" height="5.4" fill="#39414b" stroke="#f08a46"/><line x1="291.5" y1="61.0" x2="291.5" y2="77.0" stroke="#f08a46"/><rect x="290.5" y="64.4" width="2" height="6.6" fill="#39414b" stroke="#f08a46"/><line x1="296.5" y1="66.0" x2="296.5" y2="78.0" stroke="#f08a46"/><line x1="295" y1="72.5" x2="298" y2="72.5" stroke="#f08a46"/><line x1="300.5" y1="72.5" x2="300.5" y2="106.6" stroke="#f08a46"/><rect x="299.5" y="73.6" width="2" height="30.8" fill="#39414b" stroke="#f08a46"/><line x1="304.5" y1="101.0" x2="304.5" y2="112.5" stroke="#f08a46"/><rect x="303.5" y="104.0" width="2" height="6.0" fill="#39414b" stroke="#f08a46"/><line x1="308.5" y1="105.5" x2="308.5" y2="114.0" stroke="#f08a46"/><line x1="307" y1="110.5" x2="310" y2="110.5" stroke="#f08a46"/><line x1="312.5" y1="106.6" x2="312.5" y2="115.0" stroke="#f08a46"/><line x1="311" y1="111.5" x2="314" y2="111.5" stroke="#f08a46"/><line x1="316.5" y1="100.0" x2="316.5" y2="115.0" stroke="#f08a46"/><rect x="315.5" y="104.0" width="2" height="11.0" fill="#f6a465" stroke="#f08a46"/><line x1="320.5" y1="98.3" x2="320.5" y2="124.0" stroke="#f08a46"/><rect x="319.5" y="102.5" width="2" height="20.1" fill="#39414b" stroke="#f08a46"/><line x1="324.5" y1="120.0" x2="324.5" y2="142.8" stroke="#f08a46"/><rect x="323.5" y="122.0" width="2" height="9.7" fill="#39414b" stroke="#f08a46"/><line x1="328.5" y1="127.5" x2="328.5" y2="135.8" stroke="#f08a46"/><line x1="327" y1="132.5" x2="330" y2="132.5" stroke="#f08a46"/><line x1="332.5" y1="131.0" x2="332.5" y2="142.8" stroke="#f08a46"/><rect x="331.5" y="133.0" width="2" height="3.5" fill="#39414b" stroke="#f08a46"/><line x1="336.5" y1="134.4" x2="336.5" y2="147.0" stroke="#f08a46"/><rect x="335.5" y="135.8" width="2" height="9.1" fill="#39414b" stroke="#f08a46"/><line x1="341.5" y1="140.7" x2="341.5" y2="154.6" stroke="#f08a46"/><line x1="340" y1="142.5" x2="343" y2="142.5" stroke="#f08a46"/><line x1="345.5" y1="138.0" x2="345.5" y2="163.6" stroke="#f08a46"/><rect x="344.5" y="142.8" width="2" height="20.2" fill="#39414b" stroke="#f08a46"/><line x1="349.5" y1="156.0" x2="349.5" y2="173.3" stroke="#f08a46"/><rect x="348.5" y="162.2" width="2" height="2.1" fill="#39414b" stroke="#f08a46"/><line x1="353.5" y1="152.5" x2="353.5" y2="165.0" stroke="#f08a46"/><line x1="352" y1="163.5" x2="355" y2="163.5" stroke="#f08a46"/><line x1="357.5" y1="154.6" x2="357.5" y2="169.0" stroke="#f08a46"/><rect x="356.5" y="161.5" width="2" height="2.8" fill="#39414b" stroke="#f08a46"/><line x1="361.5" y1="158.8" x2="361.5" y2="167.0" stroke="#f08a46"/><line x1="360" y1="163.5" x2="363" y2="163.5" stroke="#f08a46"/><line x1="365.5" y1="156.0" x2="365.5" y2="169.0" stroke="#f08a46"/><line x1="364" y1="162.5" x2="367" y2="162.5" stroke="#f08a46"/><line x1="369.5" y1="156.0" x2="369.5" y2="177.5" stroke="#f08a46"/><rect x="368.5" y="162.0" width="2" height="9.0" fill="#39414b" stroke="#f08a46"/><line x1="373.5" y1="156.0" x2="373.5" y2="176.8" stroke="#f08a46"/><rect x="372.5" y="163.6" width="2" height="6.9" fill="#f6a465" stroke="#f08a46"/><line x1="377.5" y1="158.0" x2="377.5" y2="170.0" stroke="#f08a46"/><rect x="376.5" y="158.8" width="2" height="2.8" fill="#f6a465" stroke="#f08a46"/><line x1="382.5" y1="155.3" x2="382.5" y2="163.6" stroke="#f08a46"/><line x1="381" y1="160.5" x2="384" y2="160.5" stroke="#f08a46"/><line x1="386.5" y1="156.0" x2="386.5" y2="166.4" stroke="#f08a46"/><rect x="385.5" y="158.8" width="2" height="4.2" fill="#39414b" stroke="#f08a46"/><line x1="390.5" y1="142.0" x2="390.5" y2="164.3" stroke="#f08a46"/><rect x="389.5" y="147.6" width="2" height="13.9" fill="#f6a465" stroke="#f08a46"/><line x1="394.5" y1="138.0" x2="394.5" y2="163.6" stroke="#f08a46"/><rect x="393.5" y="145.6" width="2" height="16.4" fill="#39414b" stroke="#f08a46"/><line x1="398.5" y1="159.3" x2="398.5" y2="183.0" stroke="#f08a46"/><rect x="397.5" y="161.4" width="2" height="11.6" fill="#39414b" stroke="#f08a46"/><line x1="402.5" y1="160.0" x2="402.5" y2="175.3" stroke="#f08a46"/><rect x="401.5" y="162.0" width="2" height="9.0" fill="#f6a465" stroke="#f08a46"/><line x1="406.5" y1="158.0" x2="406.5" y2="167.0" stroke="#f08a46"/><line x1="405" y1="162.5" x2="408" y2="162.5" stroke="#f08a46"/><line x1="410.5" y1="159.3" x2="410.5" y2="165.0" stroke="#f08a46"/><line x1="409" y1="162.5" x2="412" y2="162.5" stroke="#f08a46"/><line x1="414.5" y1="158.0" x2="414.5" y2="170.4" stroke="#f08a46"/><rect x="413.5" y="162.0" width="2" height="6.3" fill="#39414b" stroke="#f08a46"/><line x1="418.5" y1="162.8" x2="418.5" y2="176.7" stroke="#f08a46"/><line x1="417" y1="168.5" x2="420" y2="168.5" stroke="#f08a46"/><line x1="423.5" y1="166.0" x2="423.5" y2="179.4" stroke="#f08a46"/><rect x="422.5" y="167.6" width="2" height="9.1" fill="#39414b" stroke="#f08a46"/><line x1="427.5" y1="170.4" x2="427.5" y2="178.8" stroke="#f08a46"/><line x1="426" y1="174.5" x2="429" y2="174.5" stroke="#f08a46"/><line x1="431.5" y1="171.0" x2="431.5" y2="178.0" stroke="#f08a46"/><line x1="430" y1="174.5" x2="433" y2="174.5" stroke="#f08a46"/><line x1="435.5" y1="172.5" x2="435.5" y2="181.5" stroke="#f08a46"/><rect x="434.5" y="174.0" width="2" height="6.0" fill="#39414b" stroke="#f08a46"/><line x1="439.5" y1="176.0" x2="439.5" y2="187.0" stroke="#f08a46"/><rect x="438.5" y="178.8" width="2" height="5.6" fill="#39414b" stroke="#f08a46"/><line x1="443.5" y1="167.6" x2="443.5" y2="185.7" stroke="#f08a46"/><rect x="442.5" y="176.7" width="2" height="6.3" fill="#f6a465" stroke="#f08a46"/><line x1="447.5" y1="160.7" x2="447.5" y2="182.0" stroke="#f08a46"/><rect x="446.5" y="165.5" width="2" height="9.1" fill="#f6a465" stroke="#f08a46"/><line x1="451.5" y1="158.0" x2="451.5" y2="174.0" stroke="#f08a46"/><rect x="450.5" y="165.5" width="2" height="4.2" fill="#39414b" stroke="#f08a46"/><line x1="455.5" y1="168.0" x2="455.5" y2="176.0" stroke="#f08a46"/><line x1="454" y1="171.5" x2="457" y2="171.5" stroke="#f08a46"/><line x1="459.5" y1="167.6" x2="459.5" y2="176.7" stroke="#f08a46"/><rect x="458.5" y="170.4" width="2" height="5.6" fill="#39414b" stroke="#f08a46"/><line x1="463.5" y1="168.0" x2="463.5" y2="178.0" stroke="#f08a46"/><rect x="462.5" y="169.7" width="2" height="5.6" fill="#f6a465" stroke="#f08a46"/><line x1="468.5" y1="165.3" x2="468.5" y2="185.4" stroke="#f08a46"/><rect x="467.5" y="169.4" width="2" height="12.6" fill="#39414b" stroke="#f08a46"/><line x1="472.5" y1="176.4" x2="472.5" y2="197.0" stroke="#f08a46"/><line x1="471" y1="182.5" x2="474" y2="182.5" stroke="#f08a46"/><line x1="476.5" y1="176.4" x2="476.5" y2="189.0" stroke="#f08a46"/><rect x="475.5" y="180.5" width="2" height="7.0" fill="#39414b" stroke="#f08a46"/><line x1="480.5" y1="183.3" x2="480.5" y2="195.8" stroke="#f08a46"/><rect x="479.5" y="185.4" width="2" height="8.3" fill="#39414b" stroke="#f08a46"/><line x1="484.5" y1="191.0" x2="484.5" y2="198.0" stroke="#f08a46"/><line x1="483" y1="193.5" x2="486" y2="193.5" stroke="#f08a46"/><line x1="488.5" y1="182.0" x2="488.5" y2="197.0" stroke="#f08a46"/><rect x="487.5" y="186.0" width="2" height="7.0" fill="#f6a465" stroke="#f08a46"/><line x1="492.5" y1="166.7" x2="492.5" y2="189.6" stroke="#f08a46"/><rect x="491.5" y="173.6" width="2" height="11.1" fill="#f6a465" stroke="#f08a46"/><line x1="496.5" y1="161.0" x2="496.5" y2="178.5" stroke="#f08a46"/><rect x="495.5" y="167.4" width="2" height="4.1" fill="#f6a465" stroke="#f08a46"/><line x1="500.5" y1="162.5" x2="500.5" y2="173.6" stroke="#f08a46"/><rect x="499.5" y="166.0" width="2" height="7.0" fill="#39414b" stroke="#f08a46"/><line x1="504.5" y1="168.8" x2="504.5" y2="178.5" stroke="#f08a46"/><line x1="503" y1="173.5" x2="506" y2="173.5" stroke="#f08a46"/><line x1="509.5" y1="170.0" x2="509.5" y2="177.8" stroke="#f08a46"/><line x1="508" y1="173.5" x2="511" y2="173.5" stroke="#f08a46"/><line x1="513.5" y1="171.5" x2="513.5" y2="185.4" stroke="#f08a46"/><rect x="512.5" y="173.0" width="2" height="10.3" fill="#39414b" stroke="#f08a46"/><line x1="517.5" y1="182.0" x2="517.5" y2="197.0" stroke="#f08a46"/><rect x="516.5" y="183.3" width="2" height="8.4" fill="#39414b" stroke="#f08a46"/><line x1="521.5" y1="173.0" x2="521.5" y2="197.0" stroke="#f08a46"/><rect x="520.5" y="184.7" width="2" height="5.6" fill="#f6a465" stroke="#f08a46"/><line x1="525.5" y1="182.0" x2="525.5" y2="194.4" stroke="#f08a46"/><line x1="524" y1="185.5" x2="527" y2="185.5" stroke="#f08a46"/><line x1="529.5" y1="184.7" x2="529.5" y2="193.0" stroke="#f08a46"/><rect x="528.5" y="186.0" width="2" height="5.0" fill="#39414b" stroke="#f08a46"/><line x1="533.5" y1="184.0" x2="533.5" y2="194.4" stroke="#f08a46"/><line x1="532" y1="188.5" x2="535" y2="188.5" stroke="#f08a46"/><line x1="537.5" y1="177.8" x2="537.5" y2="190.0" stroke="#f08a46"/><rect x="536.5" y="186.0" width="2" height="2.9" fill="#f6a465" stroke="#f08a46"/><line x1="541.5" y1="179.4" x2="541.5" y2="197.5" stroke="#f08a46"/><rect x="540.5" y="182.2" width="2" height="5.6" fill="#f6a465" stroke="#f08a46"/><line x1="545.5" y1="179.4" x2="545.5" y2="193.3" stroke="#f08a46"/><rect x="544.5" y="180.0" width="2" height="13.3" fill="#39414b" stroke="#f08a46"/><line x1="550.5" y1="186.4" x2="550.5" y2="197.5" stroke="#f08a46"/><rect x="549.5" y="193.3" width="2" height="3.5" fill="#39414b" stroke="#f08a46"/><line x1="554.5" y1="187.8" x2="554.5" y2="197.5" stroke="#f08a46"/><line x1="553" y1="194.5" x2="556" y2="194.5" stroke="#f08a46"/><line x1="558.5" y1="190.5" x2="558.5" y2="197.5" stroke="#f08a46"/><rect x="557.5" y="193.3" width="2" height="2.8" fill="#39414b" stroke="#f08a46"/><line x1="562.5" y1="192.0" x2="562.5" y2="213.5" stroke="#f08a46"/><rect x="561.5" y="197.5" width="2" height="15.3" fill="#39414b" stroke="#f08a46"/><line x1="566.5" y1="199.0" x2="566.5" y2="213.5" stroke="#f08a46"/><rect x="565.5" y="204.4" width="2" height="8.4" fill="#f6a465" stroke="#f08a46"/><line x1="570.5" y1="186.4" x2="570.5" y2="207.0" stroke="#f08a46"/><rect x="569.5" y="192.0" width="2" height="11.0" fill="#f6a465" stroke="#f08a46"/><line x1="574.5" y1="170.4" x2="574.5" y2="196.8" stroke="#f08a46"/><line x1="573" y1="192.5" x2="576" y2="192.5" stroke="#f08a46"/><line x1="578.5" y1="190.5" x2="578.5" y2="199.0" stroke="#f08a46"/><rect x="577.5" y="192.0" width="2" height="4.1" fill="#39414b" stroke="#f08a46"/><line x1="582.5" y1="194.0" x2="582.5" y2="206.5" stroke="#f08a46"/><rect x="581.5" y="196.1" width="2" height="6.9" fill="#39414b" stroke="#f08a46"/><line x1="586.5" y1="200.3" x2="586.5" y2="212.8" stroke="#f08a46"/><rect x="585.5" y="201.7" width="2" height="8.3" fill="#39414b" stroke="#f08a46"/><line x1="591.5" y1="201.7" x2="591.5" y2="215.5" stroke="#f08a46"/><line x1="590" y1="208.5" x2="593" y2="208.5" stroke="#f08a46"/><line x1="595.5" y1="193.3" x2="595.5" y2="212.0" stroke="#f08a46"/><rect x="594.5" y="203.0" width="2" height="5.0" fill="#f6a465" stroke="#f08a46"/><line x1="599.5" y1="196.0" x2="599.5" y2="208.6" stroke="#f08a46"/><rect x="598.5" y="199.6" width="2" height="3.4" fill="#f6a465" stroke="#f08a46"/><line x1="603.5" y1="194.0" x2="603.5" y2="205.8" stroke="#f08a46"/><line x1="602" y1="198.5" x2="605" y2="198.5" stroke="#f08a46"/><line x1="607.5" y1="194.7" x2="607.5" y2="205.8" stroke="#f08a46"/><line x1="606" y1="198.5" x2="609" y2="198.5" stroke="#f08a46"/><line x1="611.5" y1="192.0" x2="611.5" y2="205.8" stroke="#f08a46"/><line x1="610" y1="198.5" x2="613" y2="198.5" stroke="#f08a46"/><line x1="615.5" y1="194.7" x2="615.5" y2="214.9" stroke="#f08a46"/><rect x="614.5" y="197.5" width="2" height="4.2" fill="#39414b" stroke="#f08a46"/><line x1="619.5" y1="185.0" x2="619.5" y2="203.0" stroke="#f08a46"/><rect x="618.5" y="198.0" width="2" height="3.7" fill="#f6a465" stroke="#f08a46"/><line x1="623.5" y1="194.7" x2="623.5" y2="206.5" stroke="#f08a46"/><rect x="622.5" y="198.9" width="2" height="6.9" fill="#39414b" stroke="#f08a46"/><line x1="627.5" y1="190.5" x2="627.5" y2="203.8" stroke="#f08a46"/><rect x="626.5" y="199.6" width="2" height="2.8" fill="#f6a465" stroke="#f08a46"/><line x1="631.5" y1="185.0" x2="631.5" y2="204.4" stroke="#f08a46"/><rect x="630.5" y="189.2" width="2" height="6.9" fill="#f6a465" stroke="#f08a46"/><line x1="636.5" y1="174.0" x2="636.5" y2="203.8" stroke="#f08a46"/><rect x="635.5" y="187.8" width="2" height="8.3" fill="#39414b" stroke="#f08a46"/><line x1="640.5" y1="155.0" x2="640.5" y2="196.8" stroke="#f08a46"/><rect x="639.5" y="180.1" width="2" height="14.6" fill="#f6a465" stroke="#f08a46"/><line x1="644.5" y1="176.0" x2="644.5" y2="194.0" stroke="#f08a46"/><rect x="643.5" y="179.4" width="2" height="13.2" fill="#39414b" stroke="#f08a46"/><line x1="648.5" y1="189.9" x2="648.5" y2="203.0" stroke="#f08a46"/><rect x="647.5" y="192.6" width="2" height="4.2" fill="#39414b" stroke="#f08a46"/><line x1="652.5" y1="187.8" x2="652.5" y2="197.5" stroke="#f08a46"/><rect x="651.5" y="192.0" width="2" height="2.0" fill="#f6a465" stroke="#f08a46"/><line x1="656.5" y1="185.0" x2="656.5" y2="193.3" stroke="#f08a46"/><line x1="655" y1="190.5" x2="658" y2="190.5" stroke="#f08a46"/><line x1="660.5" y1="178.0" x2="660.5" y2="193.3" stroke="#f08a46"/><line x1="659" y1="187.5" x2="662" y2="187.5" stroke="#f08a46"/><line x1="664.5" y1="182.0" x2="664.5" y2="201.7" stroke="#f08a46"/><rect x="663.5" y="185.0" width="2" height="11.1" fill="#39414b" stroke="#f08a46"/><line x1="668.5" y1="169.0" x2="668.5" y2="201.0" stroke="#f08a46"/><rect x="667.5" y="173.9" width="2" height="20.8" fill="#f6a465" stroke="#f08a46"/><line x1="672.5" y1="163.5" x2="672.5" y2="178.0" stroke="#f08a46"/><line x1="671" y1="171.5" x2="674" y2="171.5" stroke="#f08a46"/><line x1="677.5" y1="167.0" x2="677.5" y2="182.2" stroke="#f08a46"/><rect x="676.5" y="167.6" width="2" height="7.7" fill="#39414b" stroke="#f08a46"/><line x1="681.5" y1="168.3" x2="681.5" y2="184.3" stroke="#f08a46"/><rect x="680.5" y="171.8" width="2" height="9.7" fill="#39414b" stroke="#f08a46"/><line x1="685.5" y1="169.0" x2="685.5" y2="181.5" stroke="#f08a46"/><rect x="684.5" y="176.0" width="2" height="3.4" fill="#f6a465" stroke="#f08a46"/><line x1="689.5" y1="164.0" x2="689.5" y2="178.0" stroke="#f08a46"/><rect x="688.5" y="167.0" width="2" height="6.9" fill="#f6a465" stroke="#f08a46"/><line x1="693.5" y1="159.3" x2="693.5" y2="187.8" stroke="#f08a46"/><rect x="692.5" y="166.2" width="2" height="11.2" fill="#39414b" stroke="#f08a46"/><line x1="697.5" y1="169.7" x2="697.5" y2="182.2" stroke="#f08a46"/><rect x="696.5" y="176.7" width="2" height="4.8" fill="#39414b" stroke="#f08a46"/><line x1="701.5" y1="174.0" x2="701.5" y2="187.8" stroke="#f08a46"/><line x1="700" y1="183.5" x2="703" y2="183.5" stroke="#f08a46"/><line x1="705.5" y1="179.4" x2="705.5" y2="188.5" stroke="#f08a46"/><line x1="704" y1="183.5" x2="707" y2="183.5" stroke="#f08a46"/><line x1="709.5" y1="176.7" x2="709.5" y2="185.7" stroke="#f08a46"/><line x1="708" y1="181.5" x2="711" y2="181.5" stroke="#f08a46"/><line x1="713.5" y1="164.9" x2="713.5" y2="180.8" stroke="#f08a46"/><rect x="712.5" y="167.6" width="2" height="11.8" fill="#f6a465" stroke="#f08a46"/><line x1="718.5" y1="156.5" x2="718.5" y2="170.4" stroke="#f08a46"/><rect x="717.5" y="157.9" width="2" height="9.1" fill="#f6a465" stroke="#f08a46"/><line x1="722.5" y1="155.0" x2="722.5" y2="163.5" stroke="#f08a46"/><rect x="721.5" y="156.5" width="2" height="5.6" fill="#39414b" stroke="#f08a46"/><line x1="726.5" y1="157.2" x2="726.5" y2="177.4" stroke="#f08a46"/><rect x="725.5" y="157.9" width="2" height="14.6" fill="#39414b" stroke="#f08a46"/><line x1="730.5" y1="155.0" x2="730.5" y2="175.3" stroke="#f08a46"/><line x1="729" y1="170.5" x2="732" y2="170.5" stroke="#f08a46"/><line x1="734.5" y1="167.0" x2="734.5" y2="183.0" stroke="#f08a46"/><line x1="733" y1="169.5" x2="736" y2="169.5" stroke="#f08a46"/><line x1="738.5" y1="164.9" x2="738.5" y2="174.6" stroke="#f08a46"/><rect x="737.5" y="167.6" width="2" height="5.6" fill="#39414b" stroke="#f08a46"/><line x1="742.5" y1="169.0" x2="742.5" y2="183.6" stroke="#f08a46"/><rect x="741.5" y="172.5" width="2" height="2.8" fill="#39414b" stroke="#f08a46"/><line x1="746.5" y1="176.0" x2="746.5" y2="189.9" stroke="#f08a46"/><rect x="745.5" y="180.8" width="2" height="4.2" fill="#39414b" stroke="#f08a46"/><line x1="750.5" y1="182.2" x2="750.5" y2="196.8" stroke="#f08a46"/><rect x="749.5" y="184.3" width="2" height="6.2" fill="#39414b" stroke="#f08a46"/><line x1="754.5" y1="180.0" x2="754.5" y2="200.3" stroke="#f08a46"/><line x1="753" y1="199.5" x2="756" y2="199.5" stroke="#f08a46"/><line x1="758.5" y1="187.8" x2="758.5" y2="210.7" stroke="#f08a46"/><rect x="757.5" y="189.2" width="2" height="16.6" fill="#39414b" stroke="#f08a46"/><line x1="762.5" y1="197.5" x2="762.5" y2="208.6" stroke="#f08a46"/><rect x="761.5" y="201.7" width="2" height="2.7" fill="#f6a465" stroke="#f08a46"/><line x1="767.5" y1="199.7" x2="767.5" y2="212.2" stroke="#f08a46"/><rect x="766.5" y="201.1" width="2" height="5.6" fill="#39414b" stroke="#f08a46"/><line x1="771.5" y1="205.3" x2="771.5" y2="219.0" stroke="#f08a46"/><rect x="770.5" y="206.0" width="2" height="11.8" fill="#39414b" stroke="#f08a46"/><line x1="775.5" y1="194.2" x2="775.5" y2="219.9" stroke="#f08a46"/><rect x="774.5" y="199.0" width="2" height="17.4" fill="#f6a465" stroke="#f08a46"/><line x1="779.5" y1="194.9" x2="779.5" y2="214.3" stroke="#f08a46"/><rect x="778.5" y="197.0" width="2" height="9.7" fill="#39414b" stroke="#f08a46"/><line x1="783.5" y1="202.5" x2="783.5" y2="217.8" stroke="#f08a46"/><rect x="782.5" y="206.0" width="2" height="2.8" fill="#39414b" stroke="#f08a46"/><line x1="787.5" y1="205.3" x2="787.5" y2="218.5" stroke="#f08a46"/><rect x="786.5" y="208.0" width="2" height="9.0" fill="#39414b" stroke="#f08a46"/><line x1="791.5" y1="202.5" x2="791.5" y2="215.7" stroke="#f08a46"/><rect x="790.5" y="206.0" width="2" height="8.3" fill="#f6a465" stroke="#f08a46"/><line x1="795.5" y1="199.0" x2="795.5" y2="209.4" stroke="#f08a46"/><line x1="794" y1="204.5" x2="797" y2="204.5" stroke="#f08a46"/><line x1="799.5" y1="200.4" x2="799.5" y2="228.9" stroke="#f08a46"/><rect x="798.5" y="203.2" width="2" height="22.2" fill="#39414b" stroke="#f08a46"/><line x1="804.5" y1="223.3" x2="804.5" y2="237.2" stroke="#f08a46"/><rect x="803.5" y="224.7" width="2" height="11.8" fill="#39414b" stroke="#f08a46"/><line x1="808.5" y1="215.0" x2="808.5" y2="238.6" stroke="#f08a46"/><rect x="807.5" y="222.0" width="2" height="15.9" fill="#f6a465" stroke="#f08a46"/><line x1="812.5" y1="216.4" x2="812.5" y2="225.4" stroke="#f08a46"/><line x1="811" y1="221.5" x2="814" y2="221.5" stroke="#f08a46"/><line x1="816.5" y1="215.0" x2="816.5" y2="226.0" stroke="#f08a46"/><line x1="815" y1="221.5" x2="818" y2="221.5" stroke="#f08a46"/><line x1="820.5" y1="217.0" x2="820.5" y2="230.3" stroke="#f08a46"/><rect x="819.5" y="219.9" width="2" height="6.9" fill="#39414b" stroke="#f08a46"/><line x1="824.5" y1="220.6" x2="824.5" y2="233.8" stroke="#f08a46"/><rect x="823.5" y="226.0" width="2" height="5.7" fill="#39414b" stroke="#f08a46"/><line x1="828.5" y1="219.9" x2="828.5" y2="235.8" stroke="#f08a46"/><rect x="827.5" y="228.9" width="2" height="2.1" fill="#39414b" stroke="#f08a46"/><line x1="832.5" y1="221.2" x2="832.5" y2="239.3" stroke="#f08a46"/><rect x="831.5" y="228.2" width="2" height="9.0" fill="#39414b" stroke="#f08a46"/><line x1="836.5" y1="233.0" x2="836.5" y2="243.5" stroke="#f08a46"/><line x1="835" y1="237.5" x2="838" y2="237.5" stroke="#f08a46"/><line x1="840.5" y1="233.0" x2="840.5" y2="247.6" stroke="#f08a46"/><rect x="839.5" y="235.1" width="2" height="6.3" fill="#39414b" stroke="#f08a46"/><line x1="845.5" y1="226.8" x2="845.5" y2="244.9" stroke="#f08a46"/><rect x="844.5" y="235.8" width="2" height="4.9" fill="#f6a465" stroke="#f08a46"/><polyline points="104.0,35.0 111.0,37.5 118.0,38.6 148.0,39.2 180.0,43.0 210.0,47.0 238.0,50.3 258.0,51.0 270.0,54.0 280.0,55.6 297.0,57.0 302.4,60.1 313.2,64.4 324.0,69.3 334.8,76.3 340.0,79.6 356.3,90.0 371.6,99.7 382.7,105.3 394.2,110.0 406.7,115.5 417.8,121.0 431.7,127.4 445.5,133.0 455.3,136.4 465.0,138.9 478.9,144.4 492.8,150.0 505.3,151.4 520.6,156.2 534.4,159.7 540.0,160.7 548.3,162.8 556.7,164.9 567.8,168.3 574.7,170.4 581.7,171.8 595.6,176.7 602.5,176.7 609.4,178.8 615.0,180.0 626.0,182.2 640.0,183.0 651.0,184.3 670.5,183.6 695.0,183.0 710.8,183.0 728.9,178.0 752.5,179.4 765.0,181.7 778.9,185.8 792.8,189.3 806.7,192.8 820.6,196.2 834.4,200.4 844.9,203.2" fill="none" stroke="#bc2a2e" stroke-width="1.5" stroke-linejoin="round"/><polyline points="68.0,35.0 76.0,37.5 84.0,35.0 92.0,37.5 106.0,37.5 113.0,35.0 220.0,35.0 228.3,50.9 245.5,57.0 250.0,59.5 268.0,69.0 276.5,68.8 283.0,67.1 296.0,68.2 302.4,75.2 313.2,81.7 324.0,90.4 332.7,101.0 340.3,105.3 357.7,124.0 370.2,135.8 382.7,141.4 390.0,144.0 395.5,146.0 398.3,148.2 406.7,151.0 417.8,154.4 431.7,159.3 445.5,164.2 455.3,166.2 465.0,167.4 472.0,170.0 478.9,173.0 490.0,176.4 498.3,174.3 513.6,174.3 520.6,177.0 534.4,180.5 540.0,180.8 548.3,183.0 556.7,185.0 565.0,188.5 573.3,189.9 581.7,191.2 590.0,194.0 602.5,195.4 615.0,197.5 637.0,196.8 642.8,195.4 662.2,194.7 670.5,190.5 677.5,189.2 692.8,184.3 709.4,185.0 717.8,180.8 728.9,176.7 745.5,176.7 755.3,180.1 765.0,185.1 778.9,191.4 792.8,197.0 806.7,203.2 820.6,209.4 834.4,215.7 844.9,221.2" fill="none" stroke="#1c1cc4" stroke-width="1.25" stroke-linejoin="round"/></g>
<rect x="40" y="38" width="106" height="12" fill="#39414b"/><rect x="150" y="38" width="136" height="12" fill="#39414b"/>
<line x1="148.5" y1="39" x2="148.5" y2="50" stroke="#f08a46"/>
<text x="40.5" y="49" font-size="10" fill="#2424c4">ential_Moving_Average</text>
<text x="150" y="49" font-size="10.2" fill="#cc2020">Exponential_Moving_Average</text>
<rect x="10" y="37" width="31" height="22" fill="#f2f2f2"/><rect x="10" y="37" width="31" height="5" fill="#d2d2d2"/>
<rect x="14.5" y="45.5" width="9.5" height="9.5" rx="1.5" fill="url(#rg)" stroke="#8a1a20"/>
<rect x="27.5" y="45.5" width="9.5" height="9.5" rx="1.5" fill="url(#bg2)" stroke="#1a5088"/>
<g clip-path="url(#c2)"><g stroke="#c42a2a" stroke-width="1.2"><line x1="12.5" y1="271" x2="12.5" y2="277.0"/><line x1="16.5" y1="271" x2="16.5" y2="279.5"/><line x1="20.5" y1="271" x2="20.5" y2="277.0"/><line x1="24.5" y1="271" x2="24.5" y2="279.5"/><line x1="28.5" y1="271" x2="28.5" y2="277.0"/><line x1="33.5" y1="271" x2="33.5" y2="279.5"/><line x1="41.5" y1="271.5" x2="41.5" y2="273.5"/><line x1="45.5" y1="271.5" x2="45.5" y2="273.9"/><line x1="49.5" y1="271.5" x2="49.5" y2="274.6"/><line x1="53.5" y1="271.5" x2="53.5" y2="276.2"/><line x1="57.5" y1="271.5" x2="57.5" y2="276.0"/><line x1="61.5" y1="271.5" x2="61.5" y2="275.7"/><line x1="65.5" y1="271.5" x2="65.5" y2="275.5"/><line x1="69.5" y1="271.5" x2="69.5" y2="275.3"/><line x1="73.5" y1="271.5" x2="73.5" y2="275.0"/><line x1="78.5" y1="271.5" x2="78.5" y2="274.7"/><line x1="82.5" y1="271.5" x2="82.5" y2="274.4"/><line x1="86.5" y1="271.5" x2="86.5" y2="274.2"/><line x1="90.5" y1="271.5" x2="90.5" y2="272.6"/><line x1="98.5" y1="271.5" x2="98.5" y2="269.2"/><line x1="102.5" y1="271.5" x2="102.5" y2="269.8"/><line x1="131.5" y1="271.5" x2="131.5" y2="273.0"/><line x1="135.5" y1="271.5" x2="135.5" y2="274.2"/><line x1="139.5" y1="271.5" x2="139.5" y2="274.2"/><line x1="143.5" y1="271.5" x2="143.5" y2="274.2"/><line x1="151.5" y1="271.5" x2="151.5" y2="266.6"/><line x1="155.5" y1="271.5" x2="155.5" y2="265.2"/><line x1="159.5" y1="271.5" x2="159.5" y2="267.6"/><line x1="163.5" y1="271.5" x2="163.5" y2="267.9"/><line x1="168.5" y1="271.5" x2="168.5" y2="267.5"/><line x1="172.5" y1="271.5" x2="172.5" y2="267.7"/><line x1="176.5" y1="271.5" x2="176.5" y2="268.1"/><line x1="180.5" y1="271.5" x2="180.5" y2="268.6"/><line x1="184.5" y1="271.5" x2="184.5" y2="269.0"/><line x1="188.5" y1="271.5" x2="188.5" y2="269.5"/><line x1="192.5" y1="271.5" x2="192.5" y2="269.9"/><line x1="196.5" y1="271.5" x2="196.5" y2="270.1"/><line x1="200.5" y1="271.5" x2="200.5" y2="272.7"/><line x1="204.5" y1="271.5" x2="204.5" y2="274.5"/><line x1="208.5" y1="271.5" x2="208.5" y2="276.2"/><line x1="213.5" y1="271.5" x2="213.5" y2="277.0"/><line x1="217.5" y1="271.5" x2="217.5" y2="277.3"/><line x1="221.5" y1="271.5" x2="221.5" y2="277.6"/><line x1="225.5" y1="271.5" x2="225.5" y2="277.9"/><line x1="229.5" y1="271.5" x2="229.5" y2="278.2"/><line x1="233.5" y1="271.5" x2="233.5" y2="276.9"/><line x1="237.5" y1="271.5" x2="237.5" y2="277.0"/><line x1="241.5" y1="271.5" x2="241.5" y2="277.1"/><line x1="245.5" y1="271.5" x2="245.5" y2="277.2"/><line x1="249.5" y1="271.5" x2="249.5" y2="277.3"/><line x1="253.5" y1="271.5" x2="253.5" y2="277.6"/><line x1="258.5" y1="271.5" x2="258.5" y2="277.9"/><line x1="262.5" y1="271.5" x2="262.5" y2="278.3"/><line x1="266.5" y1="271.5" x2="266.5" y2="278.5"/><line x1="270.5" y1="271.5" x2="270.5" y2="275.8"/><line x1="278.5" y1="271.5" x2="278.5" y2="268.0"/><line x1="282.5" y1="271.5" x2="282.5" y2="265.7"/><line x1="286.5" y1="271.5" x2="286.5" y2="266.2"/><line x1="290.5" y1="271.5" x2="290.5" y2="267.2"/><line x1="294.5" y1="271.5" x2="294.5" y2="268.3"/><line x1="298.5" y1="271.5" x2="298.5" y2="272.6"/><line x1="302.5" y1="271.5" x2="302.5" y2="275.3"/><line x1="307.5" y1="271.5" x2="307.5" y2="277.9"/><line x1="311.5" y1="271.5" x2="311.5" y2="278.5"/><line x1="315.5" y1="271.5" x2="315.5" y2="278.5"/><line x1="319.5" y1="271.5" x2="319.5" y2="278.5"/><line x1="323.5" y1="271.5" x2="323.5" y2="278.5"/><line x1="327.5" y1="271.5" x2="327.5" y2="278.5"/><line x1="331.5" y1="271.5" x2="331.5" y2="278.5"/><line x1="335.5" y1="271.5" x2="335.5" y2="278.5"/><line x1="339.5" y1="271.5" x2="339.5" y2="278.5"/><line x1="343.5" y1="271.5" x2="343.5" y2="278.5"/><line x1="347.5" y1="271.5" x2="347.5" y2="278.5"/><line x1="352.5" y1="271.5" x2="352.5" y2="278.5"/><line x1="356.5" y1="271.5" x2="356.5" y2="278.5"/><line x1="360.5" y1="271.5" x2="360.5" y2="278.3"/><line x1="364.5" y1="271.5" x2="364.5" y2="276.1"/><line x1="368.5" y1="271.5" x2="368.5" y2="273.9"/><line x1="376.5" y1="271.5" x2="376.5" y2="269.5"/><line x1="380.5" y1="271.5" x2="380.5" y2="270.0"/><line x1="384.5" y1="271.5" x2="384.5" y2="270.1"/><line x1="388.5" y1="271.5" x2="388.5" y2="269.6"/><line x1="392.5" y1="271.5" x2="392.5" y2="269.1"/><line x1="397.5" y1="271.5" x2="397.5" y2="268.7"/><line x1="401.5" y1="271.5" x2="401.5" y2="268.2"/><line x1="405.5" y1="271.5" x2="405.5" y2="267.7"/><line x1="409.5" y1="271.5" x2="409.5" y2="267.0"/><line x1="413.5" y1="271.5" x2="413.5" y2="265.8"/><line x1="417.5" y1="271.5" x2="417.5" y2="266.2"/><line x1="421.5" y1="271.5" x2="421.5" y2="266.6"/><line x1="425.5" y1="271.5" x2="425.5" y2="267.0"/><line x1="429.5" y1="271.5" x2="429.5" y2="267.4"/><line x1="433.5" y1="271.5" x2="433.5" y2="267.8"/><line x1="437.5" y1="271.5" x2="437.5" y2="267.6"/><line x1="442.5" y1="271.5" x2="442.5" y2="267.3"/><line x1="446.5" y1="271.5" x2="446.5" y2="266.9"/><line x1="450.5" y1="271.5" x2="450.5" y2="266.6"/><line x1="454.5" y1="271.5" x2="454.5" y2="266.3"/><line x1="458.5" y1="271.5" x2="458.5" y2="266.0"/><line x1="462.5" y1="271.5" x2="462.5" y2="266.2"/><line x1="466.5" y1="271.5" x2="466.5" y2="266.8"/><line x1="470.5" y1="271.5" x2="470.5" y2="267.4"/><line x1="474.5" y1="271.5" x2="474.5" y2="267.9"/><line x1="478.5" y1="271.5" x2="478.5" y2="268.5"/><line x1="482.5" y1="271.5" x2="482.5" y2="269.1"/><line x1="487.5" y1="271.5" x2="487.5" y2="269.7"/><line x1="491.5" y1="271.5" x2="491.5" y2="270.3"/><line x1="495.5" y1="271.5" x2="495.5" y2="268.8"/><line x1="499.5" y1="271.5" x2="499.5" y2="267.3"/><line x1="503.5" y1="271.5" x2="503.5" y2="265.7"/><line x1="507.5" y1="271.5" x2="507.5" y2="265.7"/><line x1="511.5" y1="271.5" x2="511.5" y2="267.6"/><line x1="515.5" y1="271.5" x2="515.5" y2="269.5"/><line x1="519.5" y1="271.5" x2="519.5" y2="269.7"/><line x1="523.5" y1="271.5" x2="523.5" y2="269.7"/><line x1="527.5" y1="271.5" x2="527.5" y2="269.7"/><line x1="532.5" y1="271.5" x2="532.5" y2="269.7"/><line x1="536.5" y1="271.5" x2="536.5" y2="269.7"/><line x1="540.5" y1="271.5" x2="540.5" y2="269.7"/><line x1="544.5" y1="271.5" x2="544.5" y2="270.3"/><line x1="552.5" y1="271.5" x2="552.5" y2="272.6"/><line x1="556.5" y1="271.5" x2="556.5" y2="273.7"/><line x1="560.5" y1="271.5" x2="560.5" y2="274.8"/><line x1="564.5" y1="271.5" x2="564.5" y2="275.9"/><line x1="568.5" y1="271.5" x2="568.5" y2="275.5"/><line x1="572.5" y1="271.5" x2="572.5" y2="274.7"/><line x1="577.5" y1="271.5" x2="577.5" y2="273.9"/><line x1="581.5" y1="271.5" x2="581.5" y2="273.1"/><line x1="593.5" y1="271.5" x2="593.5" y2="269.9"/><line x1="597.5" y1="271.5" x2="597.5" y2="268.4"/><line x1="601.5" y1="271.5" x2="601.5" y2="267.9"/><line x1="605.5" y1="271.5" x2="605.5" y2="268.3"/><line x1="609.5" y1="271.5" x2="609.5" y2="268.7"/><line x1="613.5" y1="271.5" x2="613.5" y2="269.1"/><line x1="617.5" y1="271.5" x2="617.5" y2="269.5"/><line x1="622.5" y1="271.5" x2="622.5" y2="269.9"/><line x1="626.5" y1="271.5" x2="626.5" y2="270.4"/><line x1="634.5" y1="271.5" x2="634.5" y2="270.1"/><line x1="638.5" y1="271.5" x2="638.5" y2="269.3"/><line x1="642.5" y1="271.5" x2="642.5" y2="268.5"/><line x1="646.5" y1="271.5" x2="646.5" y2="267.8"/><line x1="650.5" y1="271.5" x2="650.5" y2="267.5"/><line x1="654.5" y1="271.5" x2="654.5" y2="267.3"/><line x1="658.5" y1="271.5" x2="658.5" y2="267.0"/><line x1="662.5" y1="271.5" x2="662.5" y2="266.7"/><line x1="666.5" y1="271.5" x2="666.5" y2="266.4"/><line x1="671.5" y1="271.5" x2="671.5" y2="266.1"/><line x1="675.5" y1="271.5" x2="675.5" y2="265.6"/><line x1="679.5" y1="271.5" x2="679.5" y2="265.0"/><line x1="683.5" y1="271.5" x2="683.5" y2="264.5"/><line x1="687.5" y1="271.5" x2="687.5" y2="264.5"/><line x1="691.5" y1="271.5" x2="691.5" y2="264.5"/><line x1="695.5" y1="271.5" x2="695.5" y2="266.2"/><line x1="699.5" y1="271.5" x2="699.5" y2="268.5"/><line x1="703.5" y1="271.5" x2="703.5" y2="270.4"/><line x1="707.5" y1="271.5" x2="707.5" y2="270.0"/><line x1="711.5" y1="271.5" x2="711.5" y2="269.6"/><line x1="716.5" y1="271.5" x2="716.5" y2="269.2"/><line x1="720.5" y1="271.5" x2="720.5" y2="269.1"/><line x1="724.5" y1="271.5" x2="724.5" y2="269.8"/><line x1="728.5" y1="271.5" x2="728.5" y2="270.0"/><line x1="732.5" y1="271.5" x2="732.5" y2="270.1"/><line x1="736.5" y1="271.5" x2="736.5" y2="270.3"/><line x1="748.5" y1="271.5" x2="748.5" y2="274.1"/><line x1="752.5" y1="271.5" x2="752.5" y2="275.2"/><line x1="756.5" y1="271.5" x2="756.5" y2="277.7"/><line x1="761.5" y1="271.5" x2="761.5" y2="278.5"/><line x1="765.5" y1="271.5" x2="765.5" y2="278.5"/><line x1="769.5" y1="271.5" x2="769.5" y2="278.5"/><line x1="773.5" y1="271.5" x2="773.5" y2="278.5"/><line x1="777.5" y1="271.5" x2="777.5" y2="278.5"/><line x1="781.5" y1="271.5" x2="781.5" y2="278.5"/><line x1="785.5" y1="271.5" x2="785.5" y2="278.5"/><line x1="789.5" y1="271.5" x2="789.5" y2="278.5"/><line x1="793.5" y1="271.5" x2="793.5" y2="278.5"/><line x1="797.5" y1="271.5" x2="797.5" y2="278.5"/><line x1="801.5" y1="271.5" x2="801.5" y2="278.5"/><line x1="806.5" y1="271.5" x2="806.5" y2="278.5"/><line x1="810.5" y1="271.5" x2="810.5" y2="276.6"/><line x1="814.5" y1="271.5" x2="814.5" y2="275.1"/><line x1="818.5" y1="271.5" x2="818.5" y2="274.8"/><line x1="822.5" y1="271.5" x2="822.5" y2="274.7"/><line x1="826.5" y1="271.5" x2="826.5" y2="274.7"/><line x1="830.5" y1="271.5" x2="830.5" y2="275.0"/><line x1="834.5" y1="271.5" x2="834.5" y2="275.0"/><line x1="838.5" y1="271.5" x2="838.5" y2="275.0"/></g><polyline points="38.6,270.0 52.0,277.7 67.3,278.6 86.4,278.6 99.8,273.9 109.3,274.8 124.6,275.8 143.7,275.8 155.1,271.0 168.5,270.0 191.4,271.0 201.0,271.0 210.5,277.7 230.0,284.4 239.0,286.2 267.7,292.8 283.3,282.3 296.4,281.0 312.0,294.0 330.0,301.9 356.0,316.2 382.3,311.0 413.5,298.0 434.0,295.4 460.0,287.5 473.4,287.5 490.0,287.5 505.6,279.7 516.0,281.0 542.0,281.0 565.5,286.2 589.0,283.6 609.8,281.0 630.6,278.4 646.0,273.2 672.3,265.4 690.5,260.7 703.5,264.1 719.2,261.5 740.0,262.0 751.0,266.4 769.2,282.0 791.0,287.4 803.8,291.0 816.6,291.0 827.5,292.0 842.0,294.7" fill="none" stroke="#1a8c1e" stroke-width="1.2"/><polyline points="36.7,268.1 43.4,271.0 48.2,273.9 67.3,275.8 86.4,276.7 101.7,275.8 105.5,273.9 117.0,274.8 124.6,276.7 134.0,273.9 147.5,273.9 153.2,276.7 160.9,272.9 172.3,272.9 197.2,272.0 201.0,270.0 210.5,273.9 230.0,279.6 226.0,279.7 252.0,285.0 275.5,288.9 299.0,282.3 330.0,294.0 356.0,309.7 377.0,313.6 408.0,303.2 434.0,298.0 460.0,291.5 486.5,288.9 503.0,285.0 516.0,282.3 542.0,282.3 589.0,283.6 599.4,285.0 620.0,281.0 646.0,275.8 672.3,269.3 698.3,265.4 724.4,262.8 740.0,262.8 749.0,263.7 763.7,270.0 776.5,275.5 791.0,281.0 813.0,288.3 831.0,290.1 844.8,292.8" fill="none" stroke="#d02424" stroke-width="1.4"/></g>
<rect x="11" y="256" width="31" height="11" fill="#39414b"/>
<text x="12.5" y="266" font-size="11" fill="#1f8e2a" textLength="28" lengthAdjust="spacingAndGlyphs">MACD</text>
<g clip-path="url(#c3)"><line x1="11" y1="328.5" x2="845" y2="328.5" stroke="#1616a8" stroke-width="2"/><line x1="11" y1="385" x2="845" y2="385" stroke="#1616a8" stroke-width="2"/><polyline points="10.0,357.3 16.7,363.0 21.5,372.6 25.3,354.5 29.1,360.2 38.6,360.2 41.5,359.2 46.3,368.8 53.9,365.0 60.0,362.8 62.6,361.0 66.5,365.4 69.5,362.8 74.3,362.8 78.2,370.2 81.7,360.2 87.8,355.4 91.2,361.0 95.6,349.3 98.2,353.2 103.4,355.8 106.9,363.2 111.2,363.2 115.6,366.7 128.6,354.1 136.4,362.8 140.7,362.8 144.6,359.7 148.5,374.5 152.4,347.6 157.3,349.4 162.2,351.9 169.4,361.6 173.1,349.4 181.6,358.6 188.9,359.2 193.7,354.3 197.4,356.7 204.7,370.7 208.3,372.5 214.4,373.1 221.7,364.6 226.5,374.3 235.0,374.3 238.1,376.2 246.6,363.4 250.2,373.7 259.4,379.2 263.6,379.2 266.6,383.5 270.9,369.5 274.0,365.8 279.4,349.4 283.7,353.7 290.9,361.0 296.4,362.8 299.4,376.2 305.0,385.0 312.0,380.0 316.5,373.0 320.0,385.0 330.0,392.0 343.8,393.2 349.3,396.2 354.1,393.2 357.8,393.8 362.6,390.8 366.3,391.4 369.9,395.6 373.6,385.3 377.2,380.4 382.1,380.4 386.3,382.2 390.6,365.8 398.5,379.8 402.1,370.7 410.0,370.7 414.9,374.3 418.6,374.7 423.5,379.6 428.4,375.0 433.2,377.4 439.3,382.2 447.2,363.4 451.5,366.2 455.1,366.5 459.3,370.1 463.6,363.0 468.5,372.5 473.3,372.5 480.6,379.2 484.3,380.4 491.5,358.6 496.4,352.5 500.7,358.9 509.2,358.9 517.1,372.5 521.9,365.2 529.2,370.1 533.5,365.2 537.1,366.5 541.4,358.6 545.6,368.9 549.9,371.3 554.9,368.6 557.9,369.5 562.8,381.6 570.7,360.4 574.9,362.6 577.9,362.8 586.5,372.5 591.3,372.5 599.2,361.3 611.4,361.3 615.6,365.5 619.3,360.4 623.5,368.6 628.5,355.5 631.5,349.4 635.8,358.6 640.4,344.6 645.0,355.5 648.6,358.6 653.4,353.1 660.0,350.4 664.3,358.6 668.6,343.4 672.2,340.7 675.9,342.8 681.4,351.6 689.3,341.5 693.5,350.7 701.4,355.5 706.3,354.3 710.0,352.5 714.2,342.8 718.4,337.5 722.7,344.0 726.3,351.3 733.6,348.5 741.5,356.7 746.4,362.6 750.4,365.2 754.6,365.7 758.2,376.1 764.0,372.0 771.2,380.3 775.4,363.6 779.0,368.3 782.7,368.9 787.4,375.1 794.7,363.1 799.4,375.6 806.7,375.1 808.8,368.9 815.0,367.8 824.4,373.5 827.5,371.5 833.8,375.1 837.9,375.1 844.7,372.0" fill="none" stroke="#f29c3e" stroke-width="1"/><polyline points="259.4,379.2 263.6,379.2 266.6,383.5" fill="none" stroke="#30d030" stroke-width="1"/><polyline points="343.8,393.2 349.3,396.2 354.1,393.2 357.8,393.8 362.6,390.8 366.3,391.4 369.9,395.6 373.6,385.3" fill="none" stroke="#30d030" stroke-width="1"/></g>
<rect x="11" y="327" width="17" height="11" fill="#39414b"/>
<text x="12.6" y="337.2" font-size="11.2" fill="#eb9a55" textLength="14.4" lengthAdjust="spacingAndGlyphs">RSI</text>
<g stroke="#b4c4d2"><line x1="37.5" y1="399" x2="37.5" y2="403"/><line x1="62.5" y1="399" x2="62.5" y2="403"/><line x1="87.5" y1="399" x2="87.5" y2="403"/><line x1="111.5" y1="399" x2="111.5" y2="403"/><line x1="136.5" y1="399" x2="136.5" y2="403"/><line x1="160.5" y1="399" x2="160.5" y2="403"/><line x1="185.5" y1="399" x2="185.5" y2="403"/><line x1="209.5" y1="399" x2="209.5" y2="403"/><line x1="234.5" y1="399" x2="234.5" y2="403"/><line x1="259.5" y1="399" x2="259.5" y2="403"/><line x1="283.5" y1="399" x2="283.5" y2="403"/><line x1="308.5" y1="399" x2="308.5" y2="403"/><line x1="332.5" y1="399" x2="332.5" y2="403"/><line x1="357.5" y1="399" x2="357.5" y2="403"/><line x1="382.5" y1="399" x2="382.5" y2="403"/><line x1="406.5" y1="399" x2="406.5" y2="403"/><line x1="431.5" y1="399" x2="431.5" y2="403"/><line x1="455.5" y1="399" x2="455.5" y2="403"/><line x1="480.5" y1="399" x2="480.5" y2="403"/><line x1="504.5" y1="399" x2="504.5" y2="403"/><line x1="529.5" y1="399" x2="529.5" y2="403"/><line x1="554.5" y1="399" x2="554.5" y2="403"/><line x1="578.5" y1="399" x2="578.5" y2="403"/><line x1="603.5" y1="399" x2="603.5" y2="403"/><line x1="627.5" y1="399" x2="627.5" y2="403"/><line x1="652.5" y1="399" x2="652.5" y2="403"/><line x1="677.5" y1="399" x2="677.5" y2="403"/><line x1="701.5" y1="399" x2="701.5" y2="403"/><line x1="726.5" y1="399" x2="726.5" y2="403"/><line x1="742.5" y1="399" x2="742.5" y2="403"/><line x1="767.5" y1="399" x2="767.5" y2="403"/><line x1="792.5" y1="399" x2="792.5" y2="403"/><line x1="816.5" y1="399" x2="816.5" y2="403"/><line x1="840.5" y1="399" x2="840.5" y2="403"/><line x1="865.5" y1="399" x2="865.5" y2="403"/><line x1="890.5" y1="399" x2="890.5" y2="403"/></g>
<g stroke="#b4c4d2"><line x1="893" y1="48.5" x2="897" y2="48.5"/><line x1="893" y1="78.5" x2="897" y2="78.5"/><line x1="893" y1="108.5" x2="897" y2="108.5"/><line x1="893" y1="138.5" x2="897" y2="138.5"/><line x1="893" y1="168.5" x2="897" y2="168.5"/><line x1="893" y1="198.5" x2="897" y2="198.5"/><line x1="893" y1="271.5" x2="897" y2="271.5"/><line x1="893" y1="342.5" x2="897" y2="342.5"/><line x1="893" y1="369.5" x2="897" y2="369.5"/></g>
<g font-size="11" fill="#f2f2f2" stroke="#f2f2f2" stroke-width="0.4" text-anchor="middle"><text x="37.0" y="422">17</text><text x="61.7" y="422">18</text><text x="86.4" y="422">19</text><text x="110.7" y="422">20</text><text x="135.4" y="422">23</text><text x="159.9" y="422">24</text><text x="184.6" y="422">25</text><text x="208.8" y="422">26</text><text x="233.6" y="422">27</text><text x="258.3" y="422">30</text><text x="283.1" y="422">1</text><text x="307.5" y="422">2</text><text x="332.0" y="422">3</text><text x="356.4" y="422">4</text><text x="381.4" y="422">7</text><text x="405.9" y="422">8</text><text x="430.6" y="422">9</text><text x="454.7" y="422">10</text><text x="479.2" y="422">11</text><text x="503.6" y="422">14</text><text x="528.6" y="422">15</text><text x="553.6" y="422">16</text><text x="577.8" y="422">17</text><text x="602.8" y="422">18</text><text x="627.0" y="422">21</text><text x="652.0" y="422">22</text><text x="676.4" y="422">23</text><text x="700.9" y="422">24</text><text x="725.6" y="422">28</text><text x="741.7" y="422">29</text><text x="766.7" y="422">30</text><text x="791.2" y="422">4</text><text x="815.6" y="422">5</text><text x="839.8" y="422">6</text><text x="864.8" y="422">7</text><text x="889.8" y="422">8</text></g>
<g font-size="11" fill="#faf8f2" stroke="#faf8f2" stroke-width="0.5"><text x="900.5" y="55.0">0.9100</text><text x="900.5" y="85.0">0.9050</text><text x="900.5" y="115.0">0.9000</text><text x="900.5" y="145.0">0.8950</text><text x="900.5" y="175.0">0.8900</text><text x="900.5" y="205.0">0.8850</text><text x="902" y="277.5">+0.000</text><text x="900.5" y="349">60</text><text x="900.5" y="376">40</text></g>
<rect x="893" y="226" width="48" height="21" fill="#fbfbfb"/>
<text x="902" y="240" font-size="10.6" fill="#3a3f46">0.8787</text>
<path d="M11.5 376.5 H71.0 L72.5 378 V394 L71.0 395.5 H11.5 Z" fill="#5e7085" stroke="#c4d4de"/>
<rect x="10" y="376" width="2" height="27" fill="#d4ecec"/>
<text x="18.5" y="390.2" font-size="11.2" fill="#f4f6f8" stroke="#f4f6f8" stroke-width="0.15" textLength="46.5" lengthAdjust="spacing">Нов 2020</text>
<path d="M284.5 376.5 H342.0 L343.5 378 V394 L342.0 395.5 H284.5 Z" fill="#5e7085" stroke="#c4d4de"/>
<rect x="283" y="376" width="2" height="27" fill="#d4ecec"/>
<text x="291.2" y="390.2" font-size="11.2" fill="#f4f6f8" stroke="#f4f6f8" stroke-width="0.15" textLength="46.0" lengthAdjust="spacing">Дек 2020</text>
<path d="M792.5 376.5 H851.0 L852.5 378 V394 L851.0 395.5 H792.5 Z" fill="#5e7085" stroke="#c4d4de"/>
<rect x="791" y="376" width="2" height="27" fill="#d4ecec"/>
<text x="799.4" y="390.2" font-size="11.2" fill="#f4f6f8" stroke="#f4f6f8" stroke-width="0.15" textLength="45.6" lengthAdjust="spacing">Янв 2021</text>
</svg></body></html>
